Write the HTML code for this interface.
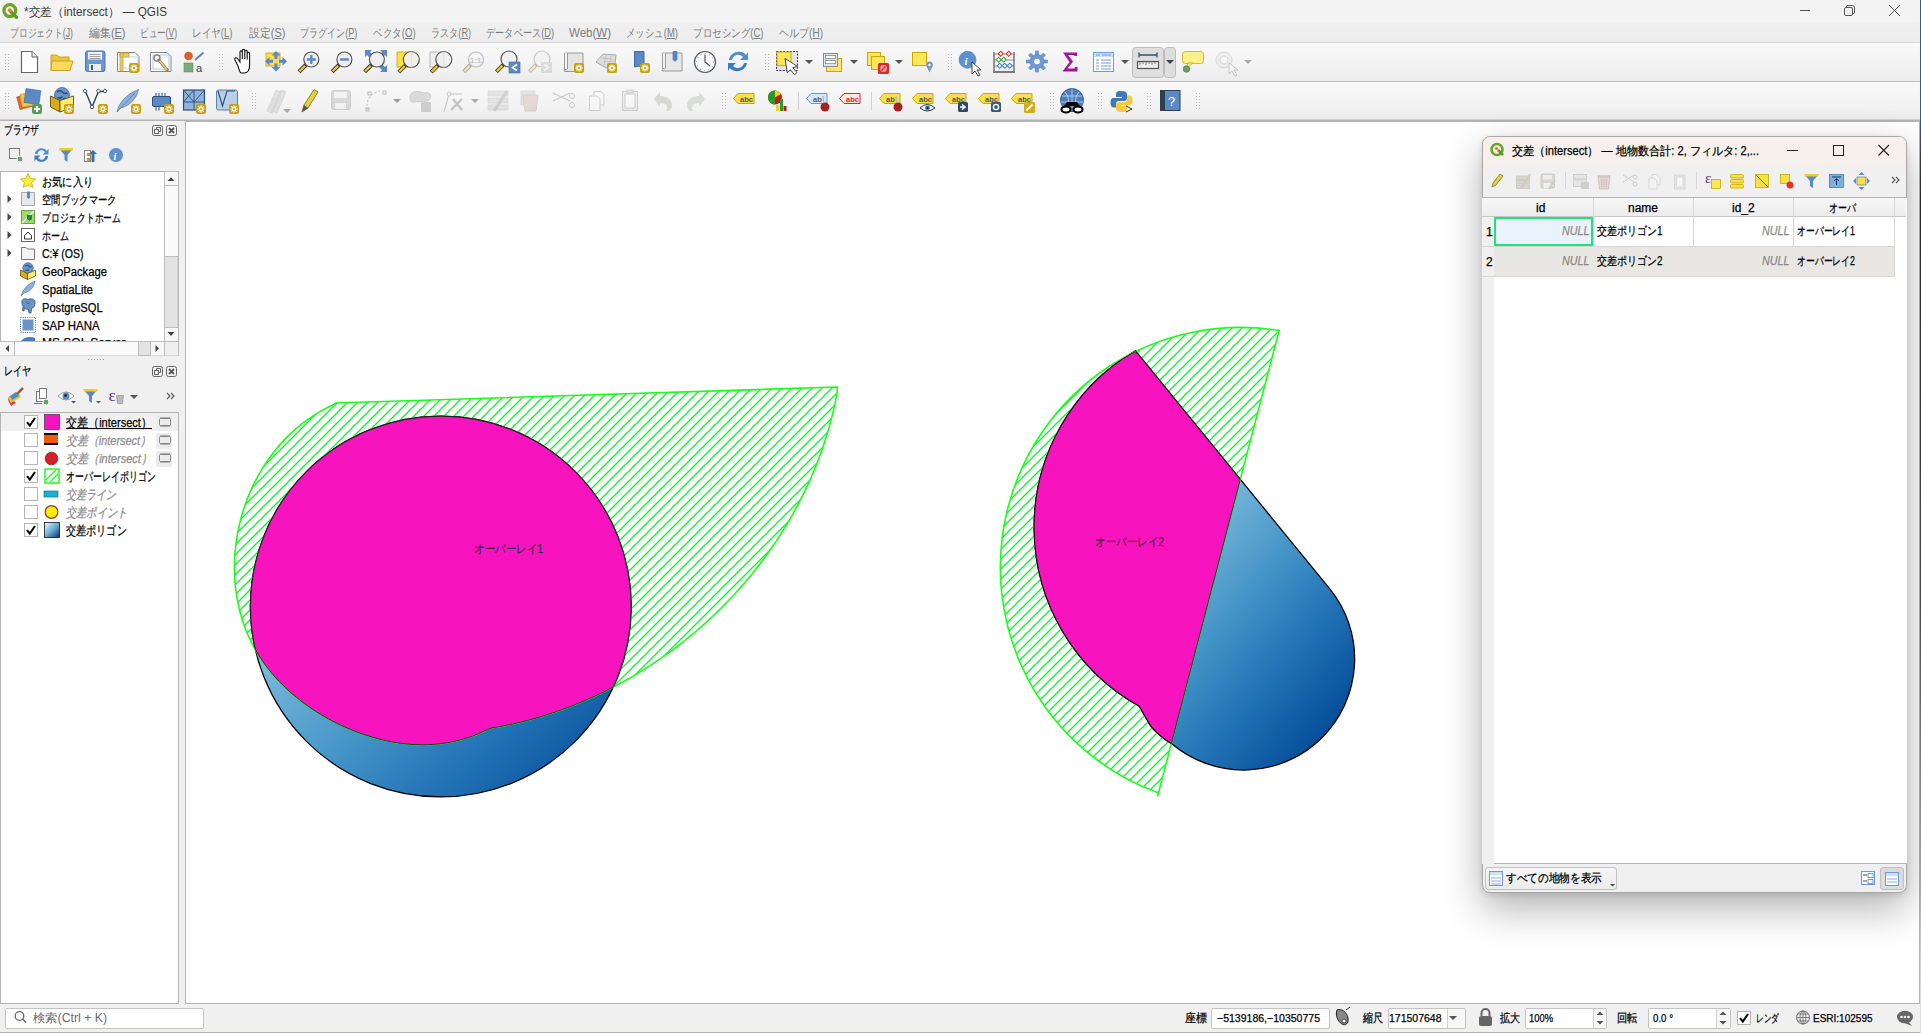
<!DOCTYPE html><html><head><meta charset="utf-8"><style>
*{margin:0;padding:0;box-sizing:border-box}
html,body{width:1921px;height:1033px;overflow:hidden;background:#f0f0f0;font-family:"Liberation Sans", sans-serif;}
.a{position:absolute}
.t{position:absolute;white-space:nowrap;line-height:16px;-webkit-text-stroke:0.25px currentColor}
svg{position:absolute;overflow:visible}
</style></head><body><div class="a" style="position:absolute;left:0px;top:0px;width:1920px;height:23px;background:#f3f3f3"></div>
<div class="t" style="left:24px;top:4px;font-size:12px;color:#3a3a3a;-webkit-text-stroke:0;transform:scaleX(0.9748);transform-origin:0 0;">*交差（intersect） — QGIS</div>
<svg style="left:0;top:0" width="24" height="23"><circle cx="9.8" cy="10.6" r="5.9" fill="none" stroke="#6aa52a" stroke-width="3.3"/><path d="M11,12 L16.5,17.3" stroke="#5e9a2a" stroke-width="3.4" stroke-linecap="round"/><circle cx="9.8" cy="10.2" r="1.9" fill="#f07a20"/></svg>
<svg style="left:1798px;top:4px" width="120" height="16"><rect x="2" y="6" width="10" height="1" fill="#555"/><rect x="46.5" y="3.5" width="8" height="8" rx="1.5" fill="none" stroke="#555"/><path d="M48.5,3.5 v-1 a1,1 0 0 1 1,-1 h5 a2,2 0 0 1 2,2 v5 a1,1 0 0 1 -1,1 h-1" fill="none" stroke="#555"/><path d="M91,1 L102,12 M102,1 L91,12" stroke="#555" stroke-width="1"/></svg>
<div class="a" style="position:absolute;left:0px;top:23px;width:1920px;height:19px;background:linear-gradient(#f0f0f0,#ededed)"></div>
<div class="a" style="position:absolute;left:0px;top:42px;width:1920px;height:1px;background:#d6d6d6"></div>
<div class="t" style="left:10px;top:25px;font-size:12px;color:#7b7b7b;-webkit-text-stroke:0;transform:scaleX(0.7326);transform-origin:0 0;">プロジェクト(<u>J</u>)</div>
<div class="t" style="left:88.5px;top:25px;font-size:12px;color:#7b7b7b;-webkit-text-stroke:0;transform:scaleX(0.9121);transform-origin:0 0;">編集(<u>E</u>)</div>
<div class="t" style="left:140px;top:25px;font-size:12px;color:#7b7b7b;-webkit-text-stroke:0;transform:scaleX(0.7113);transform-origin:0 0;">ビュー(<u>V</u>)</div>
<div class="t" style="left:192.4px;top:25px;font-size:12px;color:#7b7b7b;-webkit-text-stroke:0;transform:scaleX(0.7970);transform-origin:0 0;">レイヤ(<u>L</u>)</div>
<div class="t" style="left:249px;top:25px;font-size:12px;color:#7b7b7b;-webkit-text-stroke:0;transform:scaleX(0.9071);transform-origin:0 0;">設定(<u>S</u>)</div>
<div class="t" style="left:299.5px;top:25px;font-size:12px;color:#7b7b7b;-webkit-text-stroke:0;transform:scaleX(0.7538);transform-origin:0 0;">プラグイン(<u>P</u>)</div>
<div class="t" style="left:372.8px;top:25px;font-size:12px;color:#7b7b7b;-webkit-text-stroke:0;transform:scaleX(0.7986);transform-origin:0 0;">ベクタ(<u>O</u>)</div>
<div class="t" style="left:431px;top:25px;font-size:12px;color:#7b7b7b;-webkit-text-stroke:0;transform:scaleX(0.7594);transform-origin:0 0;">ラスタ(<u>R</u>)</div>
<div class="t" style="left:486px;top:25px;font-size:12px;color:#7b7b7b;-webkit-text-stroke:0;transform:scaleX(0.7669);transform-origin:0 0;">データベース(<u>D</u>)</div>
<div class="t" style="left:569px;top:25px;font-size:12px;color:#7b7b7b;-webkit-text-stroke:0;transform:scaleX(0.9593);transform-origin:0 0;">Web(<u>W</u>)</div>
<div class="t" style="left:626px;top:25px;font-size:12px;color:#7b7b7b;-webkit-text-stroke:0;transform:scaleX(0.7879);transform-origin:0 0;">メッシュ(<u>M</u>)</div>
<div class="t" style="left:692.5px;top:25px;font-size:12px;color:#7b7b7b;-webkit-text-stroke:0;transform:scaleX(0.7951);transform-origin:0 0;">プロセシング(<u>C</u>)</div>
<div class="t" style="left:779px;top:25px;font-size:12px;color:#7b7b7b;-webkit-text-stroke:0;transform:scaleX(0.8354);transform-origin:0 0;">ヘルプ(<u>H</u>)</div>
<div class="a" style="position:absolute;left:0px;top:43px;width:1920px;height:38px;background:linear-gradient(#f9f9f9,#f3f3f3 60%,#ebebeb)"></div>
<div class="a" style="position:absolute;left:0px;top:81px;width:1920px;height:1px;background:#bdbdbd"></div>
<div class="a" style="position:absolute;left:0px;top:82px;width:1920px;height:38px;background:linear-gradient(#f9f9f9,#f3f3f3 60%,#ebebeb)"></div>
<div class="a" style="position:absolute;left:0px;top:119px;width:1920px;height:1px;background:#d0d0d0"></div>
<div class="a" style="position:absolute;left:0px;top:120px;width:1920px;height:1px;background:#b4b4b4"></div>
<svg style="left:0;top:0" width="1921" height="121"><rect x="5" y="54" width="1" height="1" fill="#b9b9b9"/><rect x="8" y="54" width="1" height="1" fill="#b9b9b9"/><rect x="5" y="57" width="1" height="1" fill="#b9b9b9"/><rect x="8" y="57" width="1" height="1" fill="#b9b9b9"/><rect x="5" y="60" width="1" height="1" fill="#b9b9b9"/><rect x="8" y="60" width="1" height="1" fill="#b9b9b9"/><rect x="5" y="63" width="1" height="1" fill="#b9b9b9"/><rect x="8" y="63" width="1" height="1" fill="#b9b9b9"/><rect x="5" y="66" width="1" height="1" fill="#b9b9b9"/><rect x="8" y="66" width="1" height="1" fill="#b9b9b9"/><rect x="5" y="69" width="1" height="1" fill="#b9b9b9"/><rect x="8" y="69" width="1" height="1" fill="#b9b9b9"/><path d="M21.5,51.5 H32 L37.5,57 V72.5 H21.5Z" fill="#fff" stroke="#666" stroke-width="1.2"/><path d="M32,51.5 V57 H37.5" fill="#eee" stroke="#666"/><path d="M51,55 H57 L59,57 H69 V70.5 H51Z" fill="#e8c53a" stroke="#c9a227"/><path d="M52,61 H73 L70,70.5 H51Z" fill="#ffd95a" stroke="#c9a227"/><rect x="85.5" y="51" width="19.5" height="20.5" rx="2" fill="#6b99cf" stroke="#4d78ad"/><rect x="88" y="52" width="14" height="7.5" fill="#f4f4f4"/><path d="M89.5,54.5h11M89.5,56.5h11M89.5,58.5h11" stroke="#666" stroke-width="0.6"/><rect x="89" y="64" width="12" height="7" fill="#eee"/><rect x="91" y="65" width="2" height="5" fill="#3d5f8f"/><path d="M117.5,52.5 H135 L139,56.5 V71.5 H117.5Z" fill="#fff" stroke="#888"/><path d="M120,53 h3 v18 h-3z M120,53 h9 v4 h-9z" fill="#f5cf45" stroke="#c9a227" stroke-width="0.8"/><rect x="121" y="57" width="17" height="11" fill="none" stroke="#aac4ee" stroke-width="0.8"/><rect x="129" y="63" width="10" height="10" rx="2" fill="#c9a10c"/><g stroke="#fff" stroke-width="1.3"><path d="M134,64.5v7M130.5,68h7M131.5,65.5l5,5M136.5,65.5l-5,5"/></g><circle cx="134" cy="68" r="1.6" fill="#c9a10c" stroke="#fff" stroke-width="1"/><path d="M150.5,52.5 H167 L171,56.5 V71.5 H150.5Z" fill="#fff" stroke="#888"/><rect x="153" y="55" width="16" height="14" fill="none" stroke="#aac4ee"/><path d="M158,59 L168,71" stroke="#8a7a50" stroke-width="3"/><path d="M159,60 L167,70" stroke="#e8cf80" stroke-width="1.6"/><circle cx="157" cy="58" r="3" fill="none" stroke="#888" stroke-width="1.5"/><circle cx="188.5" cy="56" r="4.3" fill="#d9622b"/><path d="M195,60 L203.5,52.5" stroke="#5a86c0" stroke-width="2"/><rect x="184" y="63" width="9" height="9" fill="#7aab7a" stroke="#5d8d5d" stroke-width="0.6"/><text x="196" y="71.5" font-size="11" fill="#444" font-family="Liberation Sans">a</text><rect x="219" y="54" width="1" height="1" fill="#b9b9b9"/><rect x="222" y="54" width="1" height="1" fill="#b9b9b9"/><rect x="219" y="57" width="1" height="1" fill="#b9b9b9"/><rect x="222" y="57" width="1" height="1" fill="#b9b9b9"/><rect x="219" y="60" width="1" height="1" fill="#b9b9b9"/><rect x="222" y="60" width="1" height="1" fill="#b9b9b9"/><rect x="219" y="63" width="1" height="1" fill="#b9b9b9"/><rect x="222" y="63" width="1" height="1" fill="#b9b9b9"/><rect x="219" y="66" width="1" height="1" fill="#b9b9b9"/><rect x="222" y="66" width="1" height="1" fill="#b9b9b9"/><rect x="219" y="69" width="1" height="1" fill="#b9b9b9"/><rect x="222" y="69" width="1" height="1" fill="#b9b9b9"/><path d="M238,66 L235,60 C234,58 236,57 237.5,58.5 L240,62 V52 C240,50.5 242.3,50.5 242.3,52 V59 V50.5 C242.3,49 244.8,49 244.8,50.5 V59 V51.5 C244.8,50 247.2,50 247.2,51.5 V59.5 V53.5 C247.2,52 249.6,52 249.6,53.5 V65 C249.6,70 247.5,73 244,73 H241.5 C240,73 239,70 238,66Z" fill="#fff" stroke="#111" stroke-width="1.1"/><rect x="266" y="53" width="14" height="13" fill="#f7e04a" stroke="#c9a800" stroke-width="0.8"/><g fill="#5a89c6"><path d="M276,51 L280.5,55.5 H277.5 V59 H274.5 V55.5 H271.5Z"/><path d="M276,71.5 L280.5,67 H277.5 V63.5 H274.5 V67 H271.5Z"/><path d="M265,61.3 L269.5,56.8 V59.8 H273 V62.8 H269.5 V65.8Z"/><path d="M287,61.3 L282.5,56.8 V59.8 H279 V62.8 H282.5 V65.8Z"/></g><path d="M306.05,64.75 L299.05,71.75" stroke="#333" stroke-width="4"/><path d="M305.05,65.75 L299.55,71.25" stroke="#f0c830" stroke-width="2.2"/><circle cx="311.3" cy="59.5" r="7.5" fill="#eeeeee" stroke="#555" stroke-width="1.2"/><path d="M311.3,55v9M306.8,59.5h9" stroke="#5a89c6" stroke-width="2.4"/><path d="M339.15,64.75 L332.15,71.75" stroke="#333" stroke-width="4"/><path d="M338.15,65.75 L332.65,71.25" stroke="#f0c830" stroke-width="2.2"/><circle cx="344.4" cy="59.5" r="7.5" fill="#eeeeee" stroke="#555" stroke-width="1.2"/><path d="M339.9,59.5h9" stroke="#5a89c6" stroke-width="2.4"/><g fill="#5a89c6"><path d="M365,50h7l-2,2 3,3-3,3-3-3-2,2z"/><path d="M387,50v7l-2-2-3,3-3-3 3-3-2-2z"/><path d="M387,72h-7l2-2-3-3 3-3 3,3 2-2z"/></g><path d="M371.65,64.75 L364.65,71.75" stroke="#333" stroke-width="4"/><path d="M370.65,65.75 L365.15,71.25" stroke="#f0c830" stroke-width="2.2"/><circle cx="376.9" cy="59.5" r="7.5" fill="#eeeeee" stroke="#555" stroke-width="1.2"/><rect x="397" y="52" width="12" height="15" fill="#f7e04a" stroke="#c9a800" stroke-width="0.8"/><path d="M405.7,65.1 L398.7,72.1" stroke="#333" stroke-width="4"/><path d="M404.7,66.1 L399.2,71.6" stroke="#f0c830" stroke-width="2.2"/><circle cx="411.3" cy="59.5" r="8" fill="#f0efe8" stroke="#555" stroke-width="1.2"/><path d="M411.3,51.5 v16" stroke="#ddd"/><rect x="430" y="52" width="12" height="15" fill="#eee" stroke="#aaa" stroke-width="0.8"/><path d="M438.2,65.1 L431.2,72.1" stroke="#333" stroke-width="4"/><path d="M437.2,66.1 L431.7,71.6" stroke="#f0c830" stroke-width="2.2"/><circle cx="443.8" cy="59.5" r="8" fill="#f0f0f0" stroke="#555" stroke-width="1.2"/><path d="M443.8,51.5 v16" stroke="#ddd"/><g opacity="0.35"><path d="M470.75,64.75 L463.75,71.75" stroke="#333" stroke-width="4"/><path d="M469.75,65.75 L464.25,71.25" stroke="#f0c830" stroke-width="2.2"/><circle cx="476" cy="59.5" r="7.5" fill="#f4f4f4" stroke="#555" stroke-width="1.2"/><text x="470" y="63" font-size="8" font-weight="bold" fill="#666" font-family="Liberation Sans">1:1</text></g><path d="M503.4,64.6 L496.4,71.6" stroke="#333" stroke-width="4"/><path d="M502.4,65.6 L496.9,71.1" stroke="#f0c830" stroke-width="2.2"/><circle cx="509" cy="59" r="8" fill="#f0f0f0" stroke="#555" stroke-width="1.2"/><rect x="509" y="62" width="11" height="11" fill="#5a89c6" stroke="#3e6aa5" stroke-width="0.6"/><path d="M517,64.5 L512.5,67.5 L517,70.5" fill="none" stroke="#fff" stroke-width="1.6"/><g opacity="0.3"><path d="M536.4,64.6 L529.4,71.6" stroke="#333" stroke-width="4"/><path d="M535.4,65.6 L529.9,71.1" stroke="#f0c830" stroke-width="2.2"/><circle cx="542" cy="59" r="8" fill="#f0f0f0" stroke="#555" stroke-width="1.2"/><rect x="541" y="62" width="11" height="11" fill="#aaa"/><path d="M544,64.5 L548.5,67.5 L544,70.5" fill="none" stroke="#fff" stroke-width="1.6"/></g><path d="M564.5,53 H583 V71.5 H564.5Z" fill="#e4e4e4" stroke="#999"/><path d="M564.5,53 v16 q2,2 3,0 v-16" fill="#f4f4f4" stroke="#999"/><rect x="574" y="63" width="10" height="10" rx="2" fill="#c9a10c"/><g stroke="#fff" stroke-width="1.3"><path d="M579,64.5v7M575.5,68h7M576.5,65.5l5,5M581.5,65.5l-5,5"/></g><circle cx="579" cy="68" r="1.6" fill="#c9a10c" stroke="#fff" stroke-width="1"/><path d="M596,62 L603,54 L616,55 L615,64 L606,68Z" fill="#ddd" stroke="#aaa"/><path d="M600,58 L612,59 M603,62 L615,61 M606,55 L604,66 M611,56 L610,65" stroke="#bbb" stroke-width="0.7"/><rect x="607" y="63" width="10" height="10" rx="2" fill="#c9a10c"/><g stroke="#fff" stroke-width="1.3"><path d="M612,64.5v7M608.5,68h7M609.5,65.5l5,5M614.5,65.5l-5,5"/></g><circle cx="612" cy="68" r="1.6" fill="#c9a10c" stroke="#fff" stroke-width="1"/><path d="M634.5,51.5 H644 V70 L639,66 L634.5,67Z" fill="#5a89c6" stroke="#3e6aa5"/><rect x="640" y="63" width="10" height="10" rx="2" fill="#c9a10c"/><g stroke="#fff" stroke-width="1.3"><path d="M645,64.5v7M641.5,68h7M642.5,65.5l5,5M647.5,65.5l-5,5"/></g><circle cx="645" cy="68" r="1.6" fill="#c9a10c" stroke="#fff" stroke-width="1"/><path d="M662.5,53 H682 V71 H662.5Z" fill="#e8e8e8" stroke="#999"/><path d="M662.5,53 v15 q2,2 3,0 v-15" fill="#f4f4f4" stroke="#999"/><path d="M673,51.5 h4 v8 l-2,2 -2,-2z" fill="#5a89c6" stroke="#3e6aa5" stroke-width="0.6"/><circle cx="705" cy="62" r="10.5" fill="#fafafa" stroke="#555" stroke-width="1.2"/><circle cx="705" cy="62" r="8.5" fill="none" stroke="#5a89c6" stroke-width="1" stroke-dasharray="1 3.4"/><path d="M705,54.5 V62 L710,66" fill="none" stroke="#555" stroke-width="1.2"/><path d="M729,60 C730,52 741,49 746,55 L748,52 V60 H740 L743,57 C739,53 733,55 732,60Z" fill="#4f8fd0"/><path d="M747,63 C746,71 735,74 730,68 L728,71 V63 H736 L733,66 C737,70 743,68 744,63Z" fill="#3b7bc4"/><rect x="765" y="54" width="1" height="1" fill="#b9b9b9"/><rect x="768" y="54" width="1" height="1" fill="#b9b9b9"/><rect x="765" y="57" width="1" height="1" fill="#b9b9b9"/><rect x="768" y="57" width="1" height="1" fill="#b9b9b9"/><rect x="765" y="60" width="1" height="1" fill="#b9b9b9"/><rect x="768" y="60" width="1" height="1" fill="#b9b9b9"/><rect x="765" y="63" width="1" height="1" fill="#b9b9b9"/><rect x="768" y="63" width="1" height="1" fill="#b9b9b9"/><rect x="765" y="66" width="1" height="1" fill="#b9b9b9"/><rect x="768" y="66" width="1" height="1" fill="#b9b9b9"/><rect x="765" y="69" width="1" height="1" fill="#b9b9b9"/><rect x="768" y="69" width="1" height="1" fill="#b9b9b9"/><rect x="776.5" y="51.5" width="21" height="19" fill="#e4e4e4" stroke="#333" stroke-dasharray="2 1.3"/><rect x="777" y="52" width="14" height="13.5" fill="#fde65a" stroke="#c9a800" stroke-width="0.9"/><path d="M785,58.5 L787.3,72.8 L790.4,69.8 L794.6,74.6 L797,72.6 L792.8,67.7 L797.4,66.3Z" fill="#fff" stroke="#333" stroke-width="0.9" stroke-linejoin="round"/><path d="M805,60 h8 l-4,4z" fill="#555"/><rect x="826.5" y="58.5" width="15" height="13" fill="#fde65a" stroke="#c9a800"/><rect x="823.5" y="53.5" width="14" height="13" fill="#dfe6ee" stroke="#8a8a8a"/><rect x="825.5" y="55.5" width="10" height="3.2" fill="#fff" stroke="#777" stroke-width="0.7"/><rect x="825.5" y="60.5" width="10" height="3.2" fill="#fff" stroke="#777" stroke-width="0.7"/><path d="M850,60 h8 l-4,4z" fill="#555"/><rect x="867.5" y="52.5" width="13" height="13" fill="#fde65a" stroke="#c9a800"/><rect x="871.5" y="56.5" width="13" height="13" fill="#fde65a" stroke="#c9a800"/><rect x="878" y="63" width="11" height="11" rx="1.5" fill="#d9282f"/><circle cx="883.5" cy="68.5" r="3.4" fill="#f2a0a0"/><path d="M881.5,70.5 L885.5,66.5" stroke="#d9282f" stroke-width="1.2"/><path d="M895,60 h8 l-4,4z" fill="#555"/><rect x="912.5" y="52.5" width="14" height="13" fill="#fde65a" stroke="#c9a800"/><path d="M929.5,72.5 L926.3,66 A3.4,3.4 0 1 1 932.7,66Z" fill="#7a9ab4"/><circle cx="929.5" cy="65" r="1.2" fill="#fff"/><rect x="948" y="54" width="1" height="1" fill="#b9b9b9"/><rect x="951" y="54" width="1" height="1" fill="#b9b9b9"/><rect x="948" y="57" width="1" height="1" fill="#b9b9b9"/><rect x="951" y="57" width="1" height="1" fill="#b9b9b9"/><rect x="948" y="60" width="1" height="1" fill="#b9b9b9"/><rect x="951" y="60" width="1" height="1" fill="#b9b9b9"/><rect x="948" y="63" width="1" height="1" fill="#b9b9b9"/><rect x="951" y="63" width="1" height="1" fill="#b9b9b9"/><rect x="948" y="66" width="1" height="1" fill="#b9b9b9"/><rect x="951" y="66" width="1" height="1" fill="#b9b9b9"/><rect x="948" y="69" width="1" height="1" fill="#b9b9b9"/><rect x="951" y="69" width="1" height="1" fill="#b9b9b9"/><circle cx="967.5" cy="59.8" r="8.5" fill="#5f8fcc" stroke="#4a75b0" stroke-width="0.6"/><text x="964.5" y="64.5" font-size="11" font-style="italic" font-weight="bold" fill="#fff" font-family="Liberation Serif">i</text><path d="M972,62 L972,74 L975,71 L978,76 L980,75 L977,70 L981,70Z" fill="#fff" stroke="#333" stroke-width="0.9"/><path d="M994,52 V71 M1014,52 V71" stroke="#555" stroke-width="1.2"/><path d="M993,72 H1015" stroke="#555" stroke-width="1.5"/><path d="M994,54 H1014 M994,60 H1014 M994,66 H1014" stroke="#777" stroke-width="0.8"/><g fill="#fff" stroke-width="1.1"><rect x="999" y="52" width="3.5" height="3.5" transform="rotate(45 1000.7 53.7)" stroke="#d33"/><rect x="1007" y="52" width="3.5" height="3.5" transform="rotate(45 1008.7 53.7)" stroke="#d33"/><rect x="997" y="58" width="3.5" height="3.5" transform="rotate(45 998.7 59.7)" stroke="#4a4"/><rect x="1002" y="58" width="3.5" height="3.5" transform="rotate(45 1003.7 59.7)" stroke="#4a4"/><rect x="998" y="64" width="3.5" height="3.5" transform="rotate(45 999.7 65.7)" stroke="#48c"/><rect x="1003" y="64" width="3.5" height="3.5" transform="rotate(45 1004.7 65.7)" stroke="#48c"/><rect x="1008" y="64" width="3.5" height="3.5" transform="rotate(45 1009.7 65.7)" stroke="#48c"/></g><g fill="#6f9ad4" stroke="#5582c0" stroke-width="0.6"><rect x="1035.5" y="51" width="3" height="5" transform="rotate(0 1037 61.5)"/><rect x="1035.5" y="51" width="3" height="5" transform="rotate(45 1037 61.5)"/><rect x="1035.5" y="51" width="3" height="5" transform="rotate(90 1037 61.5)"/><rect x="1035.5" y="51" width="3" height="5" transform="rotate(135 1037 61.5)"/><rect x="1035.5" y="51" width="3" height="5" transform="rotate(180 1037 61.5)"/><rect x="1035.5" y="51" width="3" height="5" transform="rotate(225 1037 61.5)"/><rect x="1035.5" y="51" width="3" height="5" transform="rotate(270 1037 61.5)"/><rect x="1035.5" y="51" width="3" height="5" transform="rotate(315 1037 61.5)"/><circle cx="1037" cy="61.5" r="7"/></g><circle cx="1037" cy="61.5" r="2.8" fill="#fff"/><path d="M1063,52.5 H1077 V56 H1074.5 L1074,55 H1068 L1073,61.5 L1067.5,68.5 H1074.5 L1075,67 H1077.5 V71.5 H1062.5 L1069.5,62 Z" fill="#a0149e"/><rect x="1093.5" y="52.5" width="20" height="19" fill="#fff" stroke="#6f9ad4"/><rect x="1094" y="53" width="19" height="4" fill="#cfe0f5"/><path d="M1096,55h4M1102,55h9" stroke="#6f9ad4" stroke-width="1.2"/><path d="M1096,60h3M1101,60h10M1096,63h3M1101,63h10M1096,66h3M1101,66h10M1096,69h3M1101,69h10" stroke="#6f9ad4" stroke-width="1"/><path d="M1121,60 h8 l-4,4z" fill="#555"/><rect x="1132.5" y="47.5" width="31" height="30" rx="3" fill="#dedede" stroke="#bdbdbd"/><rect x="1164.5" y="47.5" width="11" height="30" rx="3" fill="#dedede" stroke="#bdbdbd"/><path d="M1139,55 H1157 M1139,52.5 V57.5 M1157,52.5 V57.5" stroke="#2e4f7a" stroke-width="1.3"/><rect x="1137.5" y="61.5" width="21" height="7" fill="#eee" stroke="#555" stroke-width="1.2"/><path d="M1140,62v3M1143,62v2M1146,62v3M1149,62v2M1152,62v3M1155,62v2" stroke="#555" stroke-width="0.8"/><path d="M1166,60 h8 l-4,4z" fill="#444"/><rect x="1182.5" y="51.5" width="21" height="12" rx="3" fill="#fdf08a" stroke="#d8b820"/><path d="M1188,63 L1187,68 L1193,63Z" fill="#fdf08a" stroke="#d8b820"/><circle cx="1186.5" cy="69" r="3.3" fill="#6aa06a" stroke="#4a7a4a" stroke-width="0.6"/><g opacity="0.3"><circle cx="1224" cy="60" r="8" fill="#ddd" stroke="#999"/><circle cx="1224" cy="60" r="4" fill="#fff" stroke="#999"/><path d="M1229,63 L1229,74 L1232,71 L1235,76 L1237,75 L1234,70 L1238,70Z" fill="#fff" stroke="#555" stroke-width="0.9"/></g><path d="M1244,60 h8 l-4,4z" fill="#aaa"/><rect x="5" y="93" width="1" height="1" fill="#b9b9b9"/><rect x="8" y="93" width="1" height="1" fill="#b9b9b9"/><rect x="5" y="96" width="1" height="1" fill="#b9b9b9"/><rect x="8" y="96" width="1" height="1" fill="#b9b9b9"/><rect x="5" y="99" width="1" height="1" fill="#b9b9b9"/><rect x="8" y="99" width="1" height="1" fill="#b9b9b9"/><rect x="5" y="102" width="1" height="1" fill="#b9b9b9"/><rect x="8" y="102" width="1" height="1" fill="#b9b9b9"/><rect x="5" y="105" width="1" height="1" fill="#b9b9b9"/><rect x="8" y="105" width="1" height="1" fill="#b9b9b9"/><rect x="5" y="108" width="1" height="1" fill="#b9b9b9"/><rect x="8" y="108" width="1" height="1" fill="#b9b9b9"/><rect x="18" y="95" width="14" height="13" transform="rotate(-15 25 101)" fill="#e2672f" stroke="#b94a1a" stroke-width="0.6"/><rect x="21" y="93" width="14" height="13" transform="rotate(-10 28 99)" fill="#f4c73d" stroke="#c9a227" stroke-width="0.6"/><rect x="25" y="89.5" width="15" height="14" transform="rotate(8 32 96)" fill="#5a89c6" stroke="#3e6aa5" stroke-width="0.6"/><rect x="32" y="104" width="10" height="10" rx="2" fill="#5b9a5b"/><path d="M37,106v6M34,109h6" stroke="#fff" stroke-width="2"/><circle cx="62" cy="95" r="7.5" fill="#6a94c8" stroke="#3e6aa5" stroke-width="0.8"/><path d="M57,92 q3,-2.5 5.5,0 q2,2.5 5,1 M57.5,97.5 q3,1.5 5,-1 M63,99 q2,-1 4,0" stroke="#2e4f7a" stroke-width="1.5" fill="none"/><path d="M50.5,96 L60,100.5 V112 L50.5,107Z" fill="#d9ae14" stroke="#4a3f10" stroke-width="0.8"/><path d="M60,100.5 L73.5,96 V107 L60,112Z" fill="#f7ea70" stroke="#4a3f10" stroke-width="0.8"/><rect x="64" y="104" width="10" height="10" rx="2" fill="#c9a10c"/><g stroke="#fff" stroke-width="1.2" stroke-linecap="round"><path d="M69,105.8v6.4M65.8,109h6.4M66.7,106.7l4.6,4.6M71.3,106.7l-4.6,4.6"/></g><circle cx="69" cy="109" r="1.1" fill="#c9a10c"/><path d="M85.5,91.5 L92,107 L98.5,91.5 L105,91.5" fill="none" stroke="#2e4050" stroke-width="1.4"/><g fill="#fff" stroke="#2e4050" stroke-width="0.9"><rect x="83.5" y="89.5" width="3" height="3" transform="rotate(45 85 91)"/><rect x="97" y="89.5" width="3" height="3" transform="rotate(45 98.5 91)"/><rect x="103.5" y="89.5" width="3" height="3" transform="rotate(45 105 91)"/><circle cx="92" cy="107" r="1.7"/></g><rect x="98" y="104" width="10" height="10" rx="2" fill="#c9a10c"/><g stroke="#fff" stroke-width="1.2" stroke-linecap="round"><path d="M103,105.8v6.4M99.8,109h6.4M100.7,106.7l4.6,4.6M105.3,106.7l-4.6,4.6"/></g><circle cx="103" cy="109" r="1.1" fill="#c9a10c"/><path d="M117,112 C119,103 125,95 138.5,89.5 C137,97 131,106 120,108Z" fill="#8fb0d8" stroke="#5d80b0" stroke-width="0.8"/><path d="M117,112 L135,93" stroke="#5d80b0" stroke-width="0.8"/><rect x="131" y="104" width="10" height="10" rx="2" fill="#c9a10c"/><g stroke="#fff" stroke-width="1.2" stroke-linecap="round"><path d="M136,105.8v6.4M132.8,109h6.4M133.7,106.7l4.6,4.6M138.3,106.7l-4.6,4.6"/></g><circle cx="136" cy="109" r="1.1" fill="#c9a10c"/><rect x="152.5" y="96.5" width="18" height="10" rx="1.5" fill="#5a89c6" stroke="#2e4f7a"/><path d="M156,93v3.5M159,93v3.5M162,93v3.5M165,93v3.5M156,107v3.5M159,107v3.5" stroke="#2e4f7a" stroke-width="1"/><rect x="164" y="104" width="10" height="10" rx="2" fill="#c9a10c"/><g stroke="#fff" stroke-width="1.2" stroke-linecap="round"><path d="M169,105.8v6.4M165.8,109h6.4M166.7,106.7l4.6,4.6M171.3,106.7l-4.6,4.6"/></g><circle cx="169" cy="109" r="1.1" fill="#c9a10c"/><rect x="183.5" y="90" width="21" height="20" fill="#8fb3dc" stroke="#2e4f7a" stroke-width="1.2"/><path d="M183.5,102 H204.5 M194,90 V110 M183.5,90 L194,102 M194,90 L183.5,102 M204.5,90 L194,102" stroke="#2e4f7a" stroke-width="0.9"/><rect x="196" y="104" width="10" height="10" rx="2" fill="#c9a10c"/><g stroke="#fff" stroke-width="1.2" stroke-linecap="round"><path d="M201,105.8v6.4M197.8,109h6.4M198.7,106.7l4.6,4.6M203.3,106.7l-4.6,4.6"/></g><circle cx="201" cy="109" r="1.1" fill="#c9a10c"/><rect x="216.5" y="90" width="21" height="20" rx="2" fill="#b9cfe8" stroke="#5d80b0"/><path d="M218,91 L222.5,106 L227,91 H235" fill="none" stroke="#2e4f7a" stroke-width="1.2"/><rect x="229" y="104" width="10" height="10" rx="2" fill="#c9a10c"/><g stroke="#fff" stroke-width="1.2" stroke-linecap="round"><path d="M234,105.8v6.4M230.8,109h6.4M231.7,106.7l4.6,4.6M236.3,106.7l-4.6,4.6"/></g><circle cx="234" cy="109" r="1.1" fill="#c9a10c"/><rect x="252" y="93" width="1" height="1" fill="#b9b9b9"/><rect x="255" y="93" width="1" height="1" fill="#b9b9b9"/><rect x="252" y="96" width="1" height="1" fill="#b9b9b9"/><rect x="255" y="96" width="1" height="1" fill="#b9b9b9"/><rect x="252" y="99" width="1" height="1" fill="#b9b9b9"/><rect x="255" y="99" width="1" height="1" fill="#b9b9b9"/><rect x="252" y="102" width="1" height="1" fill="#b9b9b9"/><rect x="255" y="102" width="1" height="1" fill="#b9b9b9"/><rect x="252" y="105" width="1" height="1" fill="#b9b9b9"/><rect x="255" y="105" width="1" height="1" fill="#b9b9b9"/><rect x="252" y="108" width="1" height="1" fill="#b9b9b9"/><rect x="255" y="108" width="1" height="1" fill="#b9b9b9"/><g opacity="0.35"><path d="M267,111 L276,90 L281,92 L272,113Z M272,111 L281,90 L286,92 L277,113Z" fill="#bbb" stroke="#888" stroke-width="0.6"/></g><path d="M283,109 h8 l-4,4z" fill="#aaa"/><path d="M302,112 L304,105 L314,89.5 L318,92 L308,108Z" fill="#e6cf3a" stroke="#7a6a1a" stroke-width="0.8"/><path d="M302,112 L304,105 L308,108Z" fill="#555"/><g opacity="0.3"><rect x="331.5" y="90.5" width="19" height="19" rx="2" fill="#999" stroke="#777"/><rect x="334" y="92" width="13" height="6" fill="#eee"/><rect x="335" y="103" width="11" height="6" fill="#eee"/></g><g opacity="0.35" fill="none" stroke="#555"><path d="M367,110 C366,100 370,93 380,91" stroke-dasharray="2 2"/><rect x="366" y="108" width="3" height="3"/><rect x="368" y="92" width="3" height="3"/><rect x="383" y="91" width="3" height="3"/></g><path d="M393,99 h8 l-4,4z" fill="#999"/><g opacity="0.35"><path d="M410,97 C410,90 420,91 424,93 C430,91 432,96 430,99 C428,103 420,101 413,102 C410,102 410,100 410,97Z" fill="#aaa" stroke="#777" stroke-width="0.8"/><rect x="421" y="102" width="10" height="10" rx="1.5" fill="#888"/></g><g opacity="0.35" stroke="#666"><path d="M444,112 L449,94 M449,94 H462" fill="none"/><circle cx="449" cy="94" r="2" fill="#fff"/><path d="M451,110 L462,99 M453,99 L462,110" stroke-width="2.2"/></g><path d="M471,99 h8 l-4,4z" fill="#aaa"/><g opacity="0.3"><rect x="488" y="91" width="20" height="5" fill="#bbb" stroke="#888" stroke-width="0.6"/><rect x="488" y="98" width="20" height="5" fill="#bbb" stroke="#888" stroke-width="0.6"/><rect x="488" y="105" width="20" height="5" fill="#bbb" stroke="#888" stroke-width="0.6"/><path d="M494,111 L507,91" stroke="#777" stroke-width="3"/></g><g opacity="0.3"><rect x="521" y="91" width="14" height="14" fill="#bbb" stroke="#888" stroke-width="0.6"/><path d="M523,95 H538 L536,111 H525Z" fill="#c99" stroke="#866" stroke-width="0.8"/></g><g opacity="0.35" stroke="#777" fill="none"><path d="M553,93 L570,101 M553,101 L570,93" stroke-width="1.2"/><circle cx="572" cy="96" r="2.5"/><circle cx="572" cy="105" r="2.5"/></g><g opacity="0.3" fill="#fff" stroke="#777"><path d="M594,91.5 H601 L604,94.5 V105 H594Z"/><path d="M589.5,96 H597 L600,99 V110.5 H589.5Z"/></g><g opacity="0.3" stroke="#777"><rect x="622.5" y="91.5" width="15" height="19" fill="#ddd"/><rect x="625" y="94" width="10" height="14" fill="#fff"/><rect x="627" y="90" width="6" height="3" fill="#bbb"/></g><g opacity="0.3"><path d="M654,99 L660,92 V96 C668,96 672,100 672,105 C672,109 669,111 666,111 C668,108 668,103 660,103 V107Z" fill="#998"/></g><g opacity="0.3"><path d="M705,99 L699,92 V96 C691,96 687,100 687,105 C687,109 690,111 693,111 C691,108 691,103 699,103 V107Z" fill="#9a9"/></g><rect x="722" y="93" width="1" height="1" fill="#b9b9b9"/><rect x="725" y="93" width="1" height="1" fill="#b9b9b9"/><rect x="722" y="96" width="1" height="1" fill="#b9b9b9"/><rect x="725" y="96" width="1" height="1" fill="#b9b9b9"/><rect x="722" y="99" width="1" height="1" fill="#b9b9b9"/><rect x="725" y="99" width="1" height="1" fill="#b9b9b9"/><rect x="722" y="102" width="1" height="1" fill="#b9b9b9"/><rect x="725" y="102" width="1" height="1" fill="#b9b9b9"/><rect x="722" y="105" width="1" height="1" fill="#b9b9b9"/><rect x="725" y="105" width="1" height="1" fill="#b9b9b9"/><rect x="722" y="108" width="1" height="1" fill="#b9b9b9"/><rect x="725" y="108" width="1" height="1" fill="#b9b9b9"/><path d="M733.5,98.5 L738,93.5 H754 V103.5 H738 Z" fill="#f7e04a" stroke="#c9a800"/><text x="740" y="101.5" font-size="7.5" font-weight="bold" fill="#555" font-family="Liberation Sans">abc</text><circle cx="775" cy="97.5" r="7" fill="#c81818"/><path d="M775,97.5 L768,97.5 A7,7 0 0 1 775,90.5Z" fill="#2a9a2a"/><path d="M775,97.5 L775,90.5 A7,7 0 0 1 781,94Z" fill="#f0d020"/><path d="M775,97.5 L768,97.5 A7,7 0 0 0 775,104.5Z" fill="#2a9a2a"/><rect x="776" y="105" width="3.5" height="6" fill="#f0d020"/><rect x="780" y="99" width="3" height="12" fill="#2a9a2a"/><rect x="783.5" y="106" width="3" height="5" fill="#c81818"/><rect x="798" y="92" width="1" height="18" fill="#d0d0d0"/><path d="M806.5,98.5 L811,93.5 H827 V103.5 H811 Z" fill="#d8e8fb" stroke="#5a9ae8"/><text x="813" y="101.5" font-size="7.5" font-weight="bold" fill="#555" font-family="Liberation Sans">ab</text><circle cx="825" cy="107" r="4.5" fill="#a82020"/><path d="M823.5,102 L823,96" stroke="#bbb" stroke-width="1.5"/><path d="M839.5,98.5 L844,93.5 H860 V103.5 H844 Z" fill="#fde8ea" stroke="#e82020"/><text x="846" y="101.5" font-size="7.5" font-weight="bold" fill="#e82020" font-family="Liberation Sans">abc</text><rect x="871" y="92" width="1" height="18" fill="#d0d0d0"/><path d="M879.5,98.5 L884,93.5 H900 V103.5 H884 Z" fill="#f7e04a" stroke="#c9a800"/><text x="886" y="101.5" font-size="7.5" font-weight="bold" fill="#555" font-family="Liberation Sans">ab</text><circle cx="898" cy="107" r="4.5" fill="#a82020"/><path d="M896.5,102 L896,96" stroke="#bbb" stroke-width="1.5"/><path d="M912.5,98.5 L917,93.5 H933 V103.5 H917 Z" fill="#f7e04a" stroke="#c9a800"/><text x="919" y="101.5" font-size="7.5" font-weight="bold" fill="#555" font-family="Liberation Sans">abc</text><path d="M920,108 Q927,101 935,108 Q927,114 920,108Z" fill="#fff" stroke="#333"/><circle cx="927.5" cy="108" r="2.4" fill="#3a7ad0"/><circle cx="927.5" cy="108" r="1" fill="#000"/><path d="M945.5,98.5 L950,93.5 H966 V103.5 H950 Z" fill="#f7e04a" stroke="#c9a800"/><text x="952" y="101.5" font-size="7.5" font-weight="bold" fill="#555" font-family="Liberation Sans">abc</text><rect x="958" y="102" width="10" height="10" rx="1.5" fill="#2e4a66"/><path d="M960,107 h4 M962,104.5 L965,107 L962,109.5" stroke="#fff" stroke-width="1.6" fill="none"/><path d="M978.5,98.5 L983,93.5 H999 V103.5 H983 Z" fill="#f7e04a" stroke="#c9a800"/><text x="985" y="101.5" font-size="7.5" font-weight="bold" fill="#555" font-family="Liberation Sans">abc</text><rect x="991" y="102" width="10" height="10" rx="1.5" fill="#3a5a78"/><circle cx="996" cy="107" r="2.6" fill="none" stroke="#fff" stroke-width="1.4"/><path d="M1011.5,98.5 L1016,93.5 H1032 V103.5 H1016 Z" fill="#f7e04a" stroke="#c9a800"/><text x="1018" y="101.5" font-size="7.5" font-weight="bold" fill="#555" font-family="Liberation Sans">abc</text><rect x="1024" y="102" width="11" height="11" rx="1.5" fill="#d4ac1a"/><path d="M1026.5,110.5 L1032.5,104.5" stroke="#fff" stroke-width="1.8"/><rect x="1050" y="93" width="1" height="1" fill="#b9b9b9"/><rect x="1053" y="93" width="1" height="1" fill="#b9b9b9"/><rect x="1050" y="96" width="1" height="1" fill="#b9b9b9"/><rect x="1053" y="96" width="1" height="1" fill="#b9b9b9"/><rect x="1050" y="99" width="1" height="1" fill="#b9b9b9"/><rect x="1053" y="99" width="1" height="1" fill="#b9b9b9"/><rect x="1050" y="102" width="1" height="1" fill="#b9b9b9"/><rect x="1053" y="102" width="1" height="1" fill="#b9b9b9"/><rect x="1050" y="105" width="1" height="1" fill="#b9b9b9"/><rect x="1053" y="105" width="1" height="1" fill="#b9b9b9"/><rect x="1050" y="108" width="1" height="1" fill="#b9b9b9"/><rect x="1053" y="108" width="1" height="1" fill="#b9b9b9"/><circle cx="1072" cy="100" r="11.5" fill="#4d7fbd" stroke="#2e4f7a" stroke-width="0.8"/><path d="M1062,96 H1082 M1061,102 H1083 M1072,89 V111 M1065,92 Q1072,100 1065,108 M1079,92 Q1072,100 1079,108" stroke="#c8dcf2" stroke-width="0.8" fill="none"/><ellipse cx="1066" cy="109.5" rx="4.5" ry="3" fill="#fff" stroke="#000" stroke-width="2.2"/><ellipse cx="1078" cy="109.5" rx="4.5" ry="3" fill="#fff" stroke="#000" stroke-width="2.2"/><path d="M1064,106 L1067,102 H1077 L1080,106Z" fill="#000"/><rect x="1098" y="93" width="1" height="1" fill="#b9b9b9"/><rect x="1101" y="93" width="1" height="1" fill="#b9b9b9"/><rect x="1098" y="96" width="1" height="1" fill="#b9b9b9"/><rect x="1101" y="96" width="1" height="1" fill="#b9b9b9"/><rect x="1098" y="99" width="1" height="1" fill="#b9b9b9"/><rect x="1101" y="99" width="1" height="1" fill="#b9b9b9"/><rect x="1098" y="102" width="1" height="1" fill="#b9b9b9"/><rect x="1101" y="102" width="1" height="1" fill="#b9b9b9"/><rect x="1098" y="105" width="1" height="1" fill="#b9b9b9"/><rect x="1101" y="105" width="1" height="1" fill="#b9b9b9"/><rect x="1098" y="108" width="1" height="1" fill="#b9b9b9"/><rect x="1101" y="108" width="1" height="1" fill="#b9b9b9"/><path d="M1121,91 C1116,91 1116,93 1116,95 V97 H1122 V98 H1113 C1111,98 1110.5,101 1110.5,103 C1110.5,106 1112,107.5 1114,107.5 H1116 V104 C1116,102 1117,101 1119,101 H1124 C1126,101 1127,100 1127,98 V94 C1127,92 1125,91 1121,91Z" fill="#3d7ab5"/><path d="M1122,112 C1127,112 1127,110 1127,108 V106 H1121 V105 H1130 C1132,105 1132.5,102 1132.5,100 C1132.5,97 1131,95.5 1129,95.5 H1127 V99 C1127,101 1126,102 1124,102 H1119 C1117,102 1116,103 1116,105 V109 C1116,111 1118,112 1122,112Z" fill="#f7c93e"/><path d="M1126,106 L1132,109 L1126,112" stroke="#333" stroke-width="1" fill="none"/><rect x="1147" y="93" width="1" height="1" fill="#b9b9b9"/><rect x="1150" y="93" width="1" height="1" fill="#b9b9b9"/><rect x="1147" y="96" width="1" height="1" fill="#b9b9b9"/><rect x="1150" y="96" width="1" height="1" fill="#b9b9b9"/><rect x="1147" y="99" width="1" height="1" fill="#b9b9b9"/><rect x="1150" y="99" width="1" height="1" fill="#b9b9b9"/><rect x="1147" y="102" width="1" height="1" fill="#b9b9b9"/><rect x="1150" y="102" width="1" height="1" fill="#b9b9b9"/><rect x="1147" y="105" width="1" height="1" fill="#b9b9b9"/><rect x="1150" y="105" width="1" height="1" fill="#b9b9b9"/><rect x="1147" y="108" width="1" height="1" fill="#b9b9b9"/><rect x="1150" y="108" width="1" height="1" fill="#b9b9b9"/><rect x="1160.5" y="90.5" width="19.5" height="20" fill="#5a89c6" stroke="#2e3f50"/><rect x="1160.5" y="90.5" width="4.5" height="20" fill="#2e3f50"/><text x="1168" y="105.5" font-size="13" fill="#fff" font-family="Liberation Sans">?</text><rect x="1196" y="93" width="1" height="1" fill="#b9b9b9"/><rect x="1199" y="93" width="1" height="1" fill="#b9b9b9"/><rect x="1196" y="96" width="1" height="1" fill="#b9b9b9"/><rect x="1199" y="96" width="1" height="1" fill="#b9b9b9"/><rect x="1196" y="99" width="1" height="1" fill="#b9b9b9"/><rect x="1199" y="99" width="1" height="1" fill="#b9b9b9"/><rect x="1196" y="102" width="1" height="1" fill="#b9b9b9"/><rect x="1199" y="102" width="1" height="1" fill="#b9b9b9"/><rect x="1196" y="105" width="1" height="1" fill="#b9b9b9"/><rect x="1199" y="105" width="1" height="1" fill="#b9b9b9"/><rect x="1196" y="108" width="1" height="1" fill="#b9b9b9"/><rect x="1199" y="108" width="1" height="1" fill="#b9b9b9"/></svg>
<div class="a" style="position:absolute;left:0px;top:121px;width:185px;height:882px;background:#f0f0f0"></div>
<div class="t" style="left:4px;top:122px;font-size:12px;color:#000;;transform:scaleX(0.7292);transform-origin:0 0;">ブラウザ</div>
<div class="t" style="left:4px;top:363px;font-size:12px;color:#000;;transform:scaleX(0.7500);transform-origin:0 0;">レイヤ</div>
<div class="a" style="position:absolute;left:0px;top:171px;width:179px;height:185px;background:#fff;border:1px solid #b4b4b4"></div>
<svg style="left:0;top:171px" width="180" height="186">
<rect x="164.5" y="0.5" width="13.5" height="170.5" fill="#e3e3e3" stroke="#bdbdbd"/>
<rect x="165" y="1" width="13" height="13.5" fill="#f7f7f7"/><path d="M164.5,14.5 H178" stroke="#bdbdbd"/>
<rect x="165" y="15" width="13" height="70" fill="#fafafa"/><path d="M164.5,85.5 H178" stroke="#bdbdbd"/>
<rect x="165" y="157" width="13" height="13.5" fill="#f7f7f7"/><path d="M164.5,156.5 H178" stroke="#bdbdbd"/>
<path d="M167.5,10 L171,6.3 L174.5,10Z" fill="#444"/><path d="M167.5,161 L171,165 L174.5,161Z" fill="#444"/>
<rect x="0" y="170.5" width="178" height="14" fill="#e3e3e3" stroke="#bdbdbd"/>
<rect x="0" y="171" width="14" height="13.5" fill="#f7f7f7"/><path d="M14.5,170.5 V184.5" stroke="#bdbdbd"/>
<rect x="15" y="171" width="123" height="13.5" fill="#fafafa"/><path d="M138.5,170.5 V184.5" stroke="#bdbdbd"/>
<rect x="150.5" y="171" width="13.5" height="13.5" fill="#f7f7f7"/><path d="M150.5,170.5 V184.5 M164.5,170.5 V184.5" stroke="#bdbdbd"/>
<rect x="165" y="171" width="13" height="13.5" fill="#efefef"/>
<path d="M9,174 L5.5,177.5 L9,181Z" fill="#444"/><path d="M155.5,174 L159,177.5 L155.5,181Z" fill="#444"/>
</svg>
<div class="a" style="left:1px;top:172px;width:163px;height:169px;overflow:hidden">
<div class="t" style="left:41px;top:1.5px;font-size:12px;color:#000;;transform:scaleX(0.8500);transform-origin:0 0;">お気に入り</div>
<div class="t" style="left:41px;top:19.5px;font-size:12px;color:#000;;transform:scaleX(0.7771);transform-origin:0 0;">空間ブックマーク</div>
<svg style="left:6px;top:22px" width="6" height="10"><path d="M0.5,1 L4.5,5 L0.5,9Z" fill="#444"/></svg>
<div class="t" style="left:41px;top:37.5px;font-size:12px;color:#000;;transform:scaleX(0.7315);transform-origin:0 0;">プロジェクトホーム</div>
<svg style="left:6px;top:40px" width="6" height="10"><path d="M0.5,1 L4.5,5 L0.5,9Z" fill="#444"/></svg>
<div class="t" style="left:41px;top:55.5px;font-size:12px;color:#000;;transform:scaleX(0.7500);transform-origin:0 0;">ホーム</div>
<svg style="left:6px;top:58px" width="6" height="10"><path d="M0.5,1 L4.5,5 L0.5,9Z" fill="#444"/></svg>
<div class="t" style="left:41px;top:73.5px;font-size:12px;color:#000;;transform:scaleX(0.8766);transform-origin:0 0;">C:¥ (OS)</div>
<svg style="left:6px;top:76px" width="6" height="10"><path d="M0.5,1 L4.5,5 L0.5,9Z" fill="#444"/></svg>
<div class="t" style="left:41px;top:91.5px;font-size:12px;color:#000;;transform:scaleX(0.9367);transform-origin:0 0;">GeoPackage</div>
<div class="t" style="left:41px;top:109.5px;font-size:12px;color:#000;;transform:scaleX(0.9555);transform-origin:0 0;">SpatiaLite</div>
<div class="t" style="left:41px;top:127.5px;font-size:12px;color:#000;;transform:scaleX(0.9270);transform-origin:0 0;">PostgreSQL</div>
<div class="t" style="left:41px;top:145.5px;font-size:12px;color:#000;;transform:scaleX(0.9526);transform-origin:0 0;">SAP HANA</div>
<div class="t" style="left:41px;top:163px;font-size:12px;color:#000;;">MS SQL Server</div>
</div>
<svg style="left:88px;top:359px" width="20" height="3"><g fill="#a0a0a0"><rect x="0" y="0" width="1" height="1"/><rect x="3" y="0" width="1" height="1"/><rect x="6" y="0" width="1" height="1"/><rect x="9" y="0" width="1" height="1"/><rect x="12" y="0" width="1" height="1"/><rect x="15" y="0" width="1" height="1"/></g></svg>
<div class="a" style="position:absolute;left:0px;top:412px;width:179px;height:592px;background:#fff;border:1px solid #b4b4b4"></div>
<div class="a" style="position:absolute;left:1px;top:413px;width:177px;height:18px;background:#f0f0f0"></div>
<div class="a" style="position:absolute;left:24px;top:415px;width:14px;height:14px;background:#fff;border:1px solid #b5b5b5"></div>
<svg style="left:24px;top:415px" width="14" height="14"><path d="M3,7.2 L5.8,10.5 L11,3" fill="none" stroke="#000" stroke-width="2"/></svg>
<div class="t" style="left:66px;top:414.5px;font-size:13px;color:#000;text-decoration:underline;;transform:scaleX(0.8503);transform-origin:0 0;">交差（intersect）</div>
<div class="a" style="position:absolute;left:156px;top:415px;width:16px;height:16px;background:#ececec;border-radius:2px"></div>
<div class="a" style="position:absolute;left:24px;top:433px;width:14px;height:14px;background:#fff;border:1px solid #b5b5b5"></div>
<div class="t" style="left:66px;top:432.5px;font-size:13px;color:#8a8a8a;font-style:italic;;transform:scaleX(0.8404);transform-origin:0 0;">交差（intersect）</div>
<div class="a" style="position:absolute;left:156px;top:433px;width:16px;height:16px;background:#ececec;border-radius:2px"></div>
<div class="a" style="position:absolute;left:24px;top:451px;width:14px;height:14px;background:#fff;border:1px solid #b5b5b5"></div>
<div class="t" style="left:66px;top:450.5px;font-size:13px;color:#8a8a8a;font-style:italic;;transform:scaleX(0.8503);transform-origin:0 0;">交差（intersect）</div>
<div class="a" style="position:absolute;left:156px;top:451px;width:16px;height:16px;background:#ececec;border-radius:2px"></div>
<div class="a" style="position:absolute;left:24px;top:469px;width:14px;height:14px;background:#fff;border:1px solid #b5b5b5"></div>
<svg style="left:24px;top:469px" width="14" height="14"><path d="M3,7.2 L5.8,10.5 L11,3" fill="none" stroke="#000" stroke-width="2"/></svg>
<div class="t" style="left:66px;top:468.5px;font-size:13px;color:#000;;transform:scaleX(0.6900);transform-origin:0 0;">オーバーレイポリゴン</div>
<div class="a" style="position:absolute;left:24px;top:487px;width:14px;height:14px;background:#fff;border:1px solid #b5b5b5"></div>
<div class="t" style="left:66px;top:486.5px;font-size:13px;color:#8a8a8a;font-style:italic;;transform:scaleX(0.7738);transform-origin:0 0;">交差ライン</div>
<div class="a" style="position:absolute;left:24px;top:505px;width:14px;height:14px;background:#fff;border:1px solid #b5b5b5"></div>
<div class="t" style="left:66px;top:504.5px;font-size:13px;color:#8a8a8a;font-style:italic;;transform:scaleX(0.7872);transform-origin:0 0;">交差ポイント</div>
<div class="a" style="position:absolute;left:24px;top:523px;width:14px;height:14px;background:#fff;border:1px solid #b5b5b5"></div>
<svg style="left:24px;top:523px" width="14" height="14"><path d="M3,7.2 L5.8,10.5 L11,3" fill="none" stroke="#000" stroke-width="2"/></svg>
<div class="t" style="left:66px;top:522.5px;font-size:13px;color:#000;;transform:scaleX(0.7782);transform-origin:0 0;">交差ポリゴン</div>
<div class="a" style="position:absolute;left:185px;top:121px;width:1735px;height:883px;background:#fff;border:1px solid #b4b4b4"></div>
<svg style="left:0;top:0" width="1921" height="1033">
<defs>
<linearGradient id="bg1" gradientUnits="userSpaceOnUse" x1="154.6" y1="303.9" x2="660.2" y2="838.5"><stop offset="0.0" stop-color="#f7fbff"/><stop offset="0.125" stop-color="#deebf7"/><stop offset="0.25" stop-color="#c6dbef"/><stop offset="0.375" stop-color="#9ecae1"/><stop offset="0.5" stop-color="#6baed6"/><stop offset="0.625" stop-color="#4292c6"/><stop offset="0.75" stop-color="#2171b5"/><stop offset="0.875" stop-color="#08519c"/><stop offset="1.0" stop-color="#08306b"/></linearGradient>
<linearGradient id="bg2" gradientUnits="userSpaceOnUse" x1="981.8" y1="376.7" x2="1402.9" y2="741.6"><stop offset="0.0" stop-color="#f7fbff"/><stop offset="0.125" stop-color="#deebf7"/><stop offset="0.25" stop-color="#c6dbef"/><stop offset="0.375" stop-color="#9ecae1"/><stop offset="0.5" stop-color="#6baed6"/><stop offset="0.625" stop-color="#4292c6"/><stop offset="0.75" stop-color="#2171b5"/><stop offset="0.875" stop-color="#08519c"/><stop offset="1.0" stop-color="#08306b"/></linearGradient>
<pattern id="hatch" patternUnits="userSpaceOnUse" width="10" height="10"><path d="M-1,11 L11,-1 M-6,6 L6,-6 M4,16 L16,4" stroke="#11ee33" stroke-width="1.3"/></pattern>
<clipPath id="cp1"><circle cx="440.8" cy="606.5" r="190.4"/></clipPath>
<clipPath id="cpg1"><path d="M336.2,403 L837.1,387 L837.1,387.0 L837.2,392.3 L836.2,397.4 L835.2,402.6 L834.1,407.7 L832.9,412.8 L831.6,417.9 L830.3,422.9 L828.9,428.0 L827.4,433.0 L825.9,438.0 L824.3,442.9 L822.6,447.9 L820.9,452.8 L819.1,457.7 L817.3,462.6 L815.3,467.4 L813.3,472.2 L811.3,477.0 L809.2,481.8 L807.0,486.5 L804.8,491.2 L802.5,495.9 L800.1,500.5 L797.7,505.1 L795.2,509.7 L792.7,514.3 L790.1,518.8 L787.5,523.3 L784.8,527.7 L782.0,532.2 L779.2,536.6 L776.4,540.9 L773.4,545.2 L770.5,549.5 L767.4,553.8 L764.4,558.0 L761.2,562.2 L758.1,566.3 L754.8,570.4 L751.6,574.5 L748.2,578.5 L744.9,582.5 L741.4,586.4 L738.0,590.3 L734.5,594.2 L730.9,598.0 L727.3,601.8 L723.6,605.6 L719.9,609.3 L716.2,612.9 L712.4,616.5 L708.6,620.1 L704.7,623.6 L700.8,627.1 L696.9,630.5 L692.9,633.9 L688.9,637.2 L684.8,640.5 L680.7,643.8 L676.6,647.0 L672.4,650.1 L668.2,653.2 L663.9,656.2 L659.6,659.2 L655.3,662.2 L651.0,665.1 L646.6,667.9 L642.1,670.7 L637.7,673.4 L633.2,676.1 L628.7,678.7 L624.1,681.3 L619.6,683.8 L615.0,686.2 L610.3,688.6 L605.7,691.0 L601.0,693.3 L596.3,695.5 L591.5,697.7 L586.8,699.8 L582.0,701.8 L577.1,703.8 L572.3,705.8 L567.4,707.6 L562.5,709.4 L557.6,711.2 L552.7,712.9 L547.8,714.5 L542.8,716.1 L537.8,717.6 L532.8,719.0 L527.7,720.3 L522.7,721.6 L517.6,722.9 L512.6,724.0 L507.5,725.1 L502.3,726.2 L497.2,727.1 L491.9,727.8 L491.9,727.8 L487.5,729.6 L483.0,731.7 L478.5,733.7 L474.0,735.5 L469.5,737.1 L465.0,738.6 L460.4,739.9 L455.9,741.0 L451.3,742.0 L446.7,742.8 L442.2,743.5 L437.6,744.1 L433.0,744.4 L428.4,744.7 L423.8,744.8 L419.1,744.7 L414.5,744.6 L409.9,744.3 L405.3,743.8 L400.7,743.3 L396.1,742.6 L391.5,741.8 L386.9,740.9 L382.3,739.8 L377.8,738.7 L373.2,737.4 L368.6,736.0 L364.1,734.6 L359.6,733.0 L355.1,731.3 L350.6,729.5 L346.2,727.6 L341.8,725.7 L337.4,723.6 L333.1,721.4 L328.8,719.1 L324.6,716.7 L320.4,714.3 L316.3,711.7 L312.2,709.1 L308.3,706.3 L304.3,703.5 L300.5,700.6 L296.7,697.6 L293.0,694.5 L289.4,691.4 L285.9,688.1 L282.5,684.8 L279.2,681.4 L275.9,677.9 L272.8,674.4 L269.8,670.7 L266.9,667.0 L264.1,663.3 L261.4,659.4 L258.9,655.5 L256.4,651.5 L254.1,647.5 L251.9,643.4 L249.9,639.2 L248.0,635.0 L246.2,630.7 L244.6,626.4 L243.0,622.0 L241.6,617.6 L240.4,613.2 L239.2,608.7 L238.2,604.1 L237.3,599.6 L236.5,595.0 L235.9,590.4 L235.3,585.7 L234.9,581.1 L234.7,576.4 L234.5,571.7 L234.5,567.0 L234.5,562.3 L234.7,557.6 L235.0,553.0 L235.5,548.3 L236.0,543.6 L236.7,538.9 L237.4,534.2 L238.3,529.6 L239.3,525.0 L240.5,520.4 L241.7,515.8 L243.0,511.3 L244.5,506.8 L246.1,502.3 L247.7,497.9 L249.5,493.5 L251.4,489.1 L253.4,484.8 L255.5,480.6 L257.8,476.4 L260.1,472.3 L262.5,468.2 L265.1,464.3 L267.7,460.3 L270.5,456.5 L273.3,452.7 L276.3,449.0 L279.3,445.4 L282.5,441.9 L285.7,438.4 L289.1,435.1 L292.5,431.8 L296.1,428.6 L299.7,425.6 L303.5,422.6 L307.3,419.8 L311.3,417.1 L315.3,414.4 L319.5,411.9 L323.7,409.5 L328.0,407.3 L332.4,405.2 L336.2,403.0 Z"/></clipPath>
<clipPath id="cp2"><path d="M1135.3,350.7 L1329.6,588.7 A111.1,111.1 0 0 1 1172.4,744.3 C1165,740 1152,730 1147.8,721.1 L1139.3,706.2 A204.7,204.7 0 0 1 1135.3,350.7 Z"/></clipPath>
<clipPath id="cpg2"><path d="M1279.1,330.6 A240.0,240.0 0 0 0 1158.6,793.1 L1157.5,796.5 Z"/></clipPath>
</defs>
<circle cx="440.8" cy="606.5" r="190.4" fill="url(#bg1)" stroke="#000" stroke-width="1.3"/>
<path d="M336.2,403 L837.1,387 L837.1,387.0 L837.2,392.3 L836.2,397.4 L835.2,402.6 L834.1,407.7 L832.9,412.8 L831.6,417.9 L830.3,422.9 L828.9,428.0 L827.4,433.0 L825.9,438.0 L824.3,442.9 L822.6,447.9 L820.9,452.8 L819.1,457.7 L817.3,462.6 L815.3,467.4 L813.3,472.2 L811.3,477.0 L809.2,481.8 L807.0,486.5 L804.8,491.2 L802.5,495.9 L800.1,500.5 L797.7,505.1 L795.2,509.7 L792.7,514.3 L790.1,518.8 L787.5,523.3 L784.8,527.7 L782.0,532.2 L779.2,536.6 L776.4,540.9 L773.4,545.2 L770.5,549.5 L767.4,553.8 L764.4,558.0 L761.2,562.2 L758.1,566.3 L754.8,570.4 L751.6,574.5 L748.2,578.5 L744.9,582.5 L741.4,586.4 L738.0,590.3 L734.5,594.2 L730.9,598.0 L727.3,601.8 L723.6,605.6 L719.9,609.3 L716.2,612.9 L712.4,616.5 L708.6,620.1 L704.7,623.6 L700.8,627.1 L696.9,630.5 L692.9,633.9 L688.9,637.2 L684.8,640.5 L680.7,643.8 L676.6,647.0 L672.4,650.1 L668.2,653.2 L663.9,656.2 L659.6,659.2 L655.3,662.2 L651.0,665.1 L646.6,667.9 L642.1,670.7 L637.7,673.4 L633.2,676.1 L628.7,678.7 L624.1,681.3 L619.6,683.8 L615.0,686.2 L610.3,688.6 L605.7,691.0 L601.0,693.3 L596.3,695.5 L591.5,697.7 L586.8,699.8 L582.0,701.8 L577.1,703.8 L572.3,705.8 L567.4,707.6 L562.5,709.4 L557.6,711.2 L552.7,712.9 L547.8,714.5 L542.8,716.1 L537.8,717.6 L532.8,719.0 L527.7,720.3 L522.7,721.6 L517.6,722.9 L512.6,724.0 L507.5,725.1 L502.3,726.2 L497.2,727.1 L491.9,727.8 L491.9,727.8 L487.5,729.6 L483.0,731.7 L478.5,733.7 L474.0,735.5 L469.5,737.1 L465.0,738.6 L460.4,739.9 L455.9,741.0 L451.3,742.0 L446.7,742.8 L442.2,743.5 L437.6,744.1 L433.0,744.4 L428.4,744.7 L423.8,744.8 L419.1,744.7 L414.5,744.6 L409.9,744.3 L405.3,743.8 L400.7,743.3 L396.1,742.6 L391.5,741.8 L386.9,740.9 L382.3,739.8 L377.8,738.7 L373.2,737.4 L368.6,736.0 L364.1,734.6 L359.6,733.0 L355.1,731.3 L350.6,729.5 L346.2,727.6 L341.8,725.7 L337.4,723.6 L333.1,721.4 L328.8,719.1 L324.6,716.7 L320.4,714.3 L316.3,711.7 L312.2,709.1 L308.3,706.3 L304.3,703.5 L300.5,700.6 L296.7,697.6 L293.0,694.5 L289.4,691.4 L285.9,688.1 L282.5,684.8 L279.2,681.4 L275.9,677.9 L272.8,674.4 L269.8,670.7 L266.9,667.0 L264.1,663.3 L261.4,659.4 L258.9,655.5 L256.4,651.5 L254.1,647.5 L251.9,643.4 L249.9,639.2 L248.0,635.0 L246.2,630.7 L244.6,626.4 L243.0,622.0 L241.6,617.6 L240.4,613.2 L239.2,608.7 L238.2,604.1 L237.3,599.6 L236.5,595.0 L235.9,590.4 L235.3,585.7 L234.9,581.1 L234.7,576.4 L234.5,571.7 L234.5,567.0 L234.5,562.3 L234.7,557.6 L235.0,553.0 L235.5,548.3 L236.0,543.6 L236.7,538.9 L237.4,534.2 L238.3,529.6 L239.3,525.0 L240.5,520.4 L241.7,515.8 L243.0,511.3 L244.5,506.8 L246.1,502.3 L247.7,497.9 L249.5,493.5 L251.4,489.1 L253.4,484.8 L255.5,480.6 L257.8,476.4 L260.1,472.3 L262.5,468.2 L265.1,464.3 L267.7,460.3 L270.5,456.5 L273.3,452.7 L276.3,449.0 L279.3,445.4 L282.5,441.9 L285.7,438.4 L289.1,435.1 L292.5,431.8 L296.1,428.6 L299.7,425.6 L303.5,422.6 L307.3,419.8 L311.3,417.1 L315.3,414.4 L319.5,411.9 L323.7,409.5 L328.0,407.3 L332.4,405.2 L336.2,403.0 Z" fill="url(#hatch)" stroke="#1aff1a" stroke-width="1.6"/>
<path d="M336.2,403 L837.1,387 L837.1,387.0 L837.2,392.3 L836.2,397.4 L835.2,402.6 L834.1,407.7 L832.9,412.8 L831.6,417.9 L830.3,422.9 L828.9,428.0 L827.4,433.0 L825.9,438.0 L824.3,442.9 L822.6,447.9 L820.9,452.8 L819.1,457.7 L817.3,462.6 L815.3,467.4 L813.3,472.2 L811.3,477.0 L809.2,481.8 L807.0,486.5 L804.8,491.2 L802.5,495.9 L800.1,500.5 L797.7,505.1 L795.2,509.7 L792.7,514.3 L790.1,518.8 L787.5,523.3 L784.8,527.7 L782.0,532.2 L779.2,536.6 L776.4,540.9 L773.4,545.2 L770.5,549.5 L767.4,553.8 L764.4,558.0 L761.2,562.2 L758.1,566.3 L754.8,570.4 L751.6,574.5 L748.2,578.5 L744.9,582.5 L741.4,586.4 L738.0,590.3 L734.5,594.2 L730.9,598.0 L727.3,601.8 L723.6,605.6 L719.9,609.3 L716.2,612.9 L712.4,616.5 L708.6,620.1 L704.7,623.6 L700.8,627.1 L696.9,630.5 L692.9,633.9 L688.9,637.2 L684.8,640.5 L680.7,643.8 L676.6,647.0 L672.4,650.1 L668.2,653.2 L663.9,656.2 L659.6,659.2 L655.3,662.2 L651.0,665.1 L646.6,667.9 L642.1,670.7 L637.7,673.4 L633.2,676.1 L628.7,678.7 L624.1,681.3 L619.6,683.8 L615.0,686.2 L610.3,688.6 L605.7,691.0 L601.0,693.3 L596.3,695.5 L591.5,697.7 L586.8,699.8 L582.0,701.8 L577.1,703.8 L572.3,705.8 L567.4,707.6 L562.5,709.4 L557.6,711.2 L552.7,712.9 L547.8,714.5 L542.8,716.1 L537.8,717.6 L532.8,719.0 L527.7,720.3 L522.7,721.6 L517.6,722.9 L512.6,724.0 L507.5,725.1 L502.3,726.2 L497.2,727.1 L491.9,727.8 L491.9,727.8 L487.5,729.6 L483.0,731.7 L478.5,733.7 L474.0,735.5 L469.5,737.1 L465.0,738.6 L460.4,739.9 L455.9,741.0 L451.3,742.0 L446.7,742.8 L442.2,743.5 L437.6,744.1 L433.0,744.4 L428.4,744.7 L423.8,744.8 L419.1,744.7 L414.5,744.6 L409.9,744.3 L405.3,743.8 L400.7,743.3 L396.1,742.6 L391.5,741.8 L386.9,740.9 L382.3,739.8 L377.8,738.7 L373.2,737.4 L368.6,736.0 L364.1,734.6 L359.6,733.0 L355.1,731.3 L350.6,729.5 L346.2,727.6 L341.8,725.7 L337.4,723.6 L333.1,721.4 L328.8,719.1 L324.6,716.7 L320.4,714.3 L316.3,711.7 L312.2,709.1 L308.3,706.3 L304.3,703.5 L300.5,700.6 L296.7,697.6 L293.0,694.5 L289.4,691.4 L285.9,688.1 L282.5,684.8 L279.2,681.4 L275.9,677.9 L272.8,674.4 L269.8,670.7 L266.9,667.0 L264.1,663.3 L261.4,659.4 L258.9,655.5 L256.4,651.5 L254.1,647.5 L251.9,643.4 L249.9,639.2 L248.0,635.0 L246.2,630.7 L244.6,626.4 L243.0,622.0 L241.6,617.6 L240.4,613.2 L239.2,608.7 L238.2,604.1 L237.3,599.6 L236.5,595.0 L235.9,590.4 L235.3,585.7 L234.9,581.1 L234.7,576.4 L234.5,571.7 L234.5,567.0 L234.5,562.3 L234.7,557.6 L235.0,553.0 L235.5,548.3 L236.0,543.6 L236.7,538.9 L237.4,534.2 L238.3,529.6 L239.3,525.0 L240.5,520.4 L241.7,515.8 L243.0,511.3 L244.5,506.8 L246.1,502.3 L247.7,497.9 L249.5,493.5 L251.4,489.1 L253.4,484.8 L255.5,480.6 L257.8,476.4 L260.1,472.3 L262.5,468.2 L265.1,464.3 L267.7,460.3 L270.5,456.5 L273.3,452.7 L276.3,449.0 L279.3,445.4 L282.5,441.9 L285.7,438.4 L289.1,435.1 L292.5,431.8 L296.1,428.6 L299.7,425.6 L303.5,422.6 L307.3,419.8 L311.3,417.1 L315.3,414.4 L319.5,411.9 L323.7,409.5 L328.0,407.3 L332.4,405.2 L336.2,403.0 Z" clip-path="url(#cp1)" fill="#f714bf" stroke="#114411" stroke-width="1"/>
<circle cx="440.8" cy="606.5" r="190.4" clip-path="url(#cpg1)" fill="none" stroke="#222" stroke-width="1.2"/>
<path d="M1135.3,350.7 L1329.6,588.7 A111.1,111.1 0 0 1 1172.4,744.3 C1165,740 1152,730 1147.8,721.1 L1139.3,706.2 A204.7,204.7 0 0 1 1135.3,350.7 Z" fill="url(#bg2)" stroke="#000" stroke-width="1.3"/>
<path d="M1279.1,330.6 A240.0,240.0 0 0 0 1158.6,793.1 L1157.5,796.5 Z" fill="url(#hatch)" stroke="#1aff1a" stroke-width="1.6"/>
<path d="M1279.1,330.6 A240.0,240.0 0 0 0 1158.6,793.1 L1157.5,796.5 Z" clip-path="url(#cp2)" fill="#f714bf" stroke="#114411" stroke-width="1"/>
<path d="M1135.3,350.7 L1329.6,588.7 A111.1,111.1 0 0 1 1172.4,744.3 C1165,740 1152,730 1147.8,721.1 L1139.3,706.2 A204.7,204.7 0 0 1 1135.3,350.7 Z" clip-path="url(#cpg2)" fill="none" stroke="#111" stroke-width="1.1"/>
</svg>
<div class="t" style="left:474px;top:541px;font-size:12px;color:#2e2a2e;-webkit-text-stroke:0.1px currentColor;transform:scaleX(0.8769);transform-origin:0 0;">オーバーレイ1</div>
<div class="t" style="left:1095px;top:534px;font-size:12px;color:#2e2a2e;-webkit-text-stroke:0.1px currentColor;transform:scaleX(0.8769);transform-origin:0 0;">オーバーレイ2</div>
<div class="a" style="position:absolute;left:1920px;top:0px;width:1px;height:1033px;background:linear-gradient(#1d5fa8 0,#1d5fa8 120px,#3a2a1a 200px,#6b4a22 600px,#e9dcc0 1000px)"></div>
<div class="a" style="position:absolute;left:0px;top:1004px;width:1920px;height:28px;background:#f0f0f0"></div>
<div class="a" style="position:absolute;left:0px;top:1032px;width:1920px;height:1px;background:#a9b9aa"></div>
<div class="a" style="position:absolute;left:5px;top:1008px;width:199px;height:21px;background:#fff;border:1px solid #c4c4c4;border-radius:2px"></div>
<div class="t" style="left:33px;top:1010px;font-size:12px;color:#6a6a6a;-webkit-text-stroke:0;transform:scaleX(1.0229);transform-origin:0 0;">検索(Ctrl + K)</div>
<div class="t" style="left:1185px;top:1010px;font-size:12px;color:#000;;transform:scaleX(0.9167);transform-origin:0 0;">座標</div>
<div class="a" style="position:absolute;left:1211px;top:1008px;width:119px;height:21px;background:#fff;border:1px solid #c4c4c4;border-radius:2px"></div>
<div class="t" style="left:1217px;top:1010px;font-size:11px;color:#000;;transform:scaleX(0.9566);transform-origin:0 0;">−5139186,−10350775</div>
<div class="t" style="left:1363px;top:1010px;font-size:12px;color:#000;;transform:scaleX(0.8333);transform-origin:0 0;">縮尺</div>
<div class="a" style="position:absolute;left:1388px;top:1008px;width:78px;height:21px;background:#fff;border:1px solid #c4c4c4;border-radius:2px"></div>
<div class="a" style="position:absolute;left:1447px;top:1009px;width:18px;height:19px;background:#f6f6f6;border-left:1px solid #d0d0d0"></div>
<div class="t" style="left:1389px;top:1010px;font-size:11px;color:#000;;transform:scaleX(0.9535);transform-origin:0 0;">171507648</div>
<div class="t" style="left:1500px;top:1010px;font-size:12px;color:#000;;transform:scaleX(0.8333);transform-origin:0 0;">拡大</div>
<div class="a" style="position:absolute;left:1525px;top:1008px;width:82px;height:21px;background:#fff;border:1px solid #c4c4c4;border-radius:2px"></div>
<div class="a" style="position:absolute;left:1593px;top:1009px;width:13px;height:19px;background:#f6f6f6;border-left:1px solid #d0d0d0"></div>
<div class="t" style="left:1529px;top:1010px;font-size:11px;color:#000;;transform:scaleX(0.8529);transform-origin:0 0;">100%</div>
<div class="t" style="left:1617px;top:1010px;font-size:12px;color:#000;;transform:scaleX(0.8542);transform-origin:0 0;">回転</div>
<div class="a" style="position:absolute;left:1648px;top:1008px;width:83px;height:21px;background:#fff;border:1px solid #c4c4c4;border-radius:2px"></div>
<div class="a" style="position:absolute;left:1716px;top:1009px;width:14px;height:19px;background:#f6f6f6;border-left:1px solid #d0d0d0"></div>
<div class="t" style="left:1653px;top:1010px;font-size:11px;color:#000;;transform:scaleX(0.8791);transform-origin:0 0;">0.0 °</div>
<div class="a" style="position:absolute;left:1737px;top:1011px;width:14px;height:14px;background:#fff;border:1px solid #b5b5b5"></div>
<svg style="left:1737px;top:1011px" width="14" height="14"><path d="M3,7.2 L5.8,10.5 L11,3" fill="none" stroke="#000" stroke-width="2"/></svg>
<div class="t" style="left:1756px;top:1010px;font-size:11px;color:#000;;transform:scaleX(0.6970);transform-origin:0 0;">レンダ</div>
<div class="t" style="left:1813px;top:1010px;font-size:11px;color:#000;;transform:scaleX(0.9093);transform-origin:0 0;">ESRI:102595</div>
<svg style="left:0;top:0" width="1921" height="1033"><circle cx="19.5" cy="1016" r="4.3" fill="none" stroke="#666" stroke-width="1.3"/><path d="M22.5,1019 L26,1022.5" stroke="#666" stroke-width="1.6"/><path d="M1337,1010 C1341,1008 1347,1012 1348,1018 C1349,1024 1345,1026 1342,1024 C1338,1022 1335,1015 1337,1010Z" fill="#888" stroke="#222"/><circle cx="1344" cy="1021" r="2" fill="#fff" stroke="#222" stroke-width="0.8"/><path d="M1346,1010 L1350,1007" stroke="#222"/><path d="M1449,1016 h8 l-4,4z" fill="#555"/><rect x="1479" y="1016" width="13" height="10" rx="2" fill="#666"/><path d="M1481.5,1016 v-3 a4,4 0 0 1 8,0 v3" fill="none" stroke="#666" stroke-width="2"/><path d="M1596.5,1015 l3.5,-3.5 3.5,3.5z M1596.5,1021 l3.5,3.5 3.5,-3.5z" fill="#555"/><path d="M1719.5,1015 l3.5,-3.5 3.5,3.5z M1719.5,1021 l3.5,3.5 3.5,-3.5z" fill="#555"/><circle cx="1803" cy="1017.5" r="6.5" fill="none" stroke="#666"/><path d="M1796.5,1017.5 h13 M1803,1011 v13 M1798,1014 h10 M1798,1021 h10" stroke="#666" stroke-width="0.8"/><ellipse cx="1803" cy="1017.5" rx="3" ry="6.5" fill="none" stroke="#666" stroke-width="0.8"/><ellipse cx="1905" cy="1017" rx="8" ry="6.3" fill="#666"/><path d="M1902,1022 L1912,1026 L1907,1020Z" fill="#666"/><circle cx="1901.5" cy="1017" r="1.3" fill="#fff"/><circle cx="1905" cy="1017" r="1.3" fill="#fff"/><circle cx="1908.5" cy="1017" r="1.3" fill="#fff"/></svg>
<svg style="left:0;top:0" width="186" height="560"><rect x="152.5" y="125.5" width="10" height="10" rx="2" fill="none" stroke="#666"/><rect x="154.5" y="129.5" width="4" height="4" fill="none" stroke="#666"/><path d="M156.5,129.5 v-2 h4 v4 h-2" fill="none" stroke="#666"/><rect x="166.5" y="125.5" width="10" height="10" rx="2" fill="none" stroke="#666"/><path d="M169,128 l5,5 M174,128 l-5,5" stroke="#555" stroke-width="1.8"/><rect x="152.5" y="366.5" width="10" height="10" rx="2" fill="none" stroke="#666"/><rect x="154.5" y="370.5" width="4" height="4" fill="none" stroke="#666"/><path d="M156.5,370.5 v-2 h4 v4 h-2" fill="none" stroke="#666"/><rect x="166.5" y="366.5" width="10" height="10" rx="2" fill="none" stroke="#666"/><path d="M169,369 l5,5 M174,369 l-5,5" stroke="#555" stroke-width="1.8"/><rect x="9.5" y="148.5" width="10" height="10" fill="none" stroke="#777"/><circle cx="20" cy="159" r="3" fill="#6aa06a" stroke="#fff"/><path d="M35,154 C35,148 44,146 47,151 L48.5,148.5 V154.5 H42.5 L45,152 C42,149 38,150 37.5,154Z" fill="#4f8fd0"/><path d="M48,156 C48,162 39,164 36,159 L34.5,161.5 V155.5 H40.5 L38,158 C41,161 45,160 45.5,156Z" fill="#3b7bc4"/><path d="M59,148.5 H73 L67.5,155 V162 L64.5,160 V155Z" fill="#5a89c6"/><rect x="59" y="148" width="14" height="2.5" fill="#f0d020"/><rect x="84.5" y="150.5" width="6" height="11" fill="#fff" stroke="#888"/><path d="M93,150 L89,154 H91.5 V162 H94.5 V154 H97Z" fill="#3d6fb0"/><rect x="87" y="153" width="3" height="3" fill="#f08020"/><rect x="87" y="158" width="3" height="3" fill="#f08020"/><circle cx="116" cy="155" r="7" fill="#5f8fcc"/><text x="113.5" y="159.5" font-size="10" font-style="italic" font-weight="bold" fill="#fff" font-family="Liberation Serif">i</text><path d="M28,173.5 L30.3,178.5 L35.5,179 L31.5,182.5 L32.8,187.5 L28,185 L23.2,187.5 L24.5,182.5 L20.5,179 L25.7,178.5Z" fill="#ffee40" stroke="#c9a800" stroke-width="0.8"/><path d="M21.5,192.5 H34.5 V205.5 H21.5Z" fill="#e8e8e8" stroke="#aaa"/><path d="M27,191.5 h3 v6 l-1.5,1.5 -1.5,-1.5z" fill="#5a89c6"/><rect x="21.5" y="210.5" width="13" height="13" fill="#9fd86b" stroke="#6aa04a"/><path d="M22,223 L34,211" stroke="#fff" stroke-width="1.2"/><path d="M27,215 h5 v4 l-2.5,2 -2.5,-2z" fill="#208a40"/><rect x="21.5" y="228.5" width="13" height="13" fill="#fff" stroke="#666"/><path d="M24.5,235.5 L28,232 L31.5,235.5 V239 H24.5Z" fill="none" stroke="#333"/><path d="M21.5,247.5 H26 L27.5,249 H34.5 V259.5 H21.5Z" fill="#f4f4f4" stroke="#777"/><circle cx="28" cy="268" r="5.3" fill="#6a94c8" stroke="#3e6aa5" stroke-width="0.7"/><path d="M25,266 q2,-1.5 3.5,0 q1.5,1.5 3,0.5 M25.5,270 q2,1 3.5,-0.5" stroke="#2e4f7a" stroke-width="1.1" fill="none"/><path d="M20.5,270 L27.5,273.5 V279.5 L20.5,276Z" fill="#d9ae14" stroke="#4a3f10" stroke-width="0.7"/><path d="M27.5,273.5 L35.5,270 V276 L27.5,279.5Z" fill="#f7ea70" stroke="#4a3f10" stroke-width="0.7"/><path d="M21,296 C23,289 28,284 35,281 C34,287 30,292 24,293Z" fill="#8fb0d8" stroke="#5d80b0" stroke-width="0.8"/><path d="M22,303 C21,299 25,298 28,299.5 C31,298 35,299 35,302.5 C35,306 33.5,308 31.5,308.5 L31,313 H29 L28.3,309 C27,309.5 25.5,309 24.5,308 L24,311 L22.5,310.5 L23,306 C22.3,305.3 22,304.2 22,303Z" fill="#6a94c8" stroke="#2e4f7a" stroke-width="0.8"/><path d="M26,302 C27,304 29,304 30,302.5" stroke="#2e4f7a" stroke-width="0.7" fill="none"/><rect x="22.5" y="319.5" width="11" height="11" fill="#6a94c8"/><rect x="20.5" y="317.5" width="15" height="15" fill="none" stroke="#3e6aa5" stroke-dasharray="1 1.2"/><path d="M21,341 C24,337 30,336 35,338 L35,341Z" fill="#4a78b8"/><path d="M9,396 L16,403 L11,406 L8,400Z" fill="#e04040"/><path d="M8,398 L18,392 L21,397 L11,403Z" fill="#f0c030"/><path d="M10,396 L16,392 L19,396 L12,400Z" fill="#4a8ad0"/><path d="M17,394 L23,388" stroke="#8a6a3a" stroke-width="2.5"/><rect x="36.5" y="391.5" width="9" height="10" fill="#fff" stroke="#777"/><rect x="39.5" y="388.5" width="7" height="10" fill="#fff" stroke="#777"/><path d="M34,403.5 h8" stroke="#777"/><circle cx="46" cy="402" r="3" fill="#6aa06a" stroke="#fff"/><path d="M58,396 Q66,388 74,396 Q66,404 58,396Z" fill="#fff" stroke="#999"/><circle cx="66" cy="396" r="3.5" fill="#5a89c6"/><circle cx="65.5" cy="395.5" r="1.3" fill="#111"/><path d="M71,401 h5 l-2.5,2.5z" fill="#555"/><path d="M83.5,389.5 H97.5 L92,396 V403 L89,401 V396Z" fill="#5a89c6"/><rect x="83.5" y="389" width="14" height="2.5" fill="#f0d020"/><path d="M96,401 h5 l-2.5,2.5z" fill="#555"/><text x="108.5" y="400.5" font-size="17" fill="#5b2d86" font-family="Liberation Serif">ε</text><path d="M116.5,395.5 h7 l-1,8 h-5z" fill="#bbb" stroke="#888" stroke-width="0.6"/><path d="M130,395 h8 l-4,4z" fill="#555"/><path d="M167,393 l3,3 -3,3 M171,393 l3,3 -3,3" fill="none" stroke="#555" stroke-width="1.1"/><rect x="44.5" y="414.5" width="15" height="15" fill="#f714bf" stroke="#222" stroke-width="0.6"/><rect x="44" y="434" width="14" height="10" fill="#f25a0f"/><rect x="44" y="433" width="14" height="2" fill="#111"/><rect x="44" y="443" width="14" height="2" fill="#111"/><circle cx="51.5" cy="458.5" r="6.3" fill="#d91f26" stroke="#8a1a1a" stroke-width="0.8"/><rect x="45" y="469" width="14" height="14" fill="#fff" stroke="#1aff1a" stroke-width="1.5"/><path d="M46,480 L56,470 M50,482 L58,474" stroke="#1aff1a" stroke-width="1.2"/><rect x="44" y="491" width="14" height="6" fill="#1bb0d8" stroke="#0a6a80" stroke-width="0.6"/><circle cx="51.5" cy="512" r="6.3" fill="#ffee00" stroke="#8a3a2a" stroke-width="1.2"/><defs><linearGradient id="lg" x1="0" y1="0" x2="1" y2="1"><stop offset="0" stop-color="#f7fbff"/><stop offset="0.5" stop-color="#6baed6"/><stop offset="1" stop-color="#08306b"/></linearGradient></defs><rect x="44.5" y="522.5" width="15" height="15" fill="url(#lg)" stroke="#111" stroke-width="0.8"/><rect x="159.5" y="418.5" width="11" height="7" rx="1" fill="none" stroke="#888"/><path d="M161,417v1.5M163,417v1.5M165,417v1.5M167,417v1.5M169,417v1.5M161,425.5v1.5M163,425.5v1.5M165,425.5v1.5M167,425.5v1.5M169,425.5v1.5" stroke="#777" stroke-width="1"/><rect x="159.5" y="436.5" width="11" height="7" rx="1" fill="none" stroke="#888"/><path d="M161,435v1.5M163,435v1.5M165,435v1.5M167,435v1.5M169,435v1.5M161,443.5v1.5M163,443.5v1.5M165,443.5v1.5M167,443.5v1.5M169,443.5v1.5" stroke="#777" stroke-width="1"/><rect x="159.5" y="454.5" width="11" height="7" rx="1" fill="none" stroke="#888"/><path d="M161,453v1.5M163,453v1.5M165,453v1.5M167,453v1.5M169,453v1.5M161,461.5v1.5M163,461.5v1.5M165,461.5v1.5M167,461.5v1.5M169,461.5v1.5" stroke="#777" stroke-width="1"/></svg>

<div class="a" style="position:absolute;left:1482px;top:136px;width:425px;height:757px;border-radius:8px;box-shadow:0 16px 40px rgba(0,0,0,0.30),0 2px 6px rgba(0,0,0,0.12);background:#f0f0f0;border:1px solid #a9a9a9;overflow:hidden">
<div class="a" style="position:absolute;left:0px;top:0px;width:425px;height:29px;background:#f6efec"></div>
</div>
<div class="t" style="left:1512px;top:143px;font-size:12px;color:#000;;transform:scaleX(0.9261);transform-origin:0 0;">交差（intersect） — 地物数合計: 2, フィルタ: 2,...</div>
<svg style="left:1780px;top:140px" width="120" height="20"><rect x="7" y="10" width="11" height="1" fill="#222"/><rect x="53.5" y="5.5" width="10" height="10" fill="none" stroke="#222" stroke-width="1"/><path d="M98.5,5 L109,15.5 M109,5 L98.5,15.5" stroke="#222" stroke-width="1.1"/></svg>
<div class="a" style="position:absolute;left:1482px;top:197px;width:425px;height:667px;background:#fff;border-top:1px solid #b4b4b4;border-bottom:1px solid #b4b4b4"></div>
<div class="a" style="position:absolute;left:1482px;top:198px;width:12px;height:666px;background:#f0f0f0"></div>
<div class="a" style="position:absolute;left:1482px;top:198px;width:424px;height:19px;background:linear-gradient(#f7f7f7,#ededed);border-bottom:1px solid #c8c8c8"></div>
<div class="a" style="position:absolute;left:1593px;top:198px;width:1px;height:79px;background:#d6d6d6"></div>
<div class="a" style="position:absolute;left:1693px;top:198px;width:1px;height:79px;background:#d6d6d6"></div>
<div class="a" style="position:absolute;left:1793px;top:198px;width:1px;height:79px;background:#d6d6d6"></div>
<div class="a" style="position:absolute;left:1894px;top:198px;width:1px;height:79px;background:#d6d6d6"></div>
<div class="a" style="position:absolute;left:1494px;top:247px;width:400px;height:30px;background:#e9e7e4"></div>
<div class="a" style="position:absolute;left:1482px;top:246px;width:412px;height:1px;background:#d6d6d6"></div>
<div class="a" style="position:absolute;left:1482px;top:276px;width:412px;height:1px;background:#d6d6d6"></div>
<div class="a" style="position:absolute;left:1494px;top:217px;width:99px;height:29px;background:#eaf3fb;border:2px solid #1ee37a"></div>
<div class="t" style="left:1536px;top:200px;font-size:12px;color:#000;;">id</div>
<div class="t" style="left:1628px;top:200px;font-size:12px;color:#000;;">name</div>
<div class="t" style="left:1732px;top:200px;font-size:12px;color:#000;;">id_2</div>
<div class="t" style="left:1829px;top:200px;font-size:12px;color:#000;;transform:scaleX(0.7500);transform-origin:0 0;">オーバ</div>
<div class="t" style="left:1486px;top:224px;font-size:12px;color:#000;;">1</div>
<div class="t" style="left:1486px;top:254px;font-size:12px;color:#000;;">2</div>
<div class="t" style="left:1562px;top:223px;font-size:12px;color:#8a8a8a;font-style:italic;transform:scaleX(0.8961);transform-origin:0 0;">NULL</div>
<div class="t" style="left:1762px;top:223px;font-size:12px;color:#8a8a8a;font-style:italic;transform:scaleX(0.8961);transform-origin:0 0;">NULL</div>
<div class="t" style="left:1562px;top:253px;font-size:12px;color:#8a8a8a;font-style:italic;transform:scaleX(0.8961);transform-origin:0 0;">NULL</div>
<div class="t" style="left:1762px;top:253px;font-size:12px;color:#8a8a8a;font-style:italic;transform:scaleX(0.8961);transform-origin:0 0;">NULL</div>
<div class="t" style="left:1597px;top:223px;font-size:12px;color:#000;;transform:scaleX(0.8324);transform-origin:0 0;">交差ポリゴン1</div>
<div class="t" style="left:1597px;top:253px;font-size:12px;color:#000;;transform:scaleX(0.8324);transform-origin:0 0;">交差ポリゴン2</div>
<div class="t" style="left:1797px;top:223px;font-size:12px;color:#000;;transform:scaleX(0.7371);transform-origin:0 0;">オーバーレイ1</div>
<div class="t" style="left:1797px;top:253px;font-size:12px;color:#000;;transform:scaleX(0.7371);transform-origin:0 0;">オーバーレイ2</div>
<div class="a" style="position:absolute;left:1485px;top:867px;width:132px;height:23px;background:linear-gradient(#f6f6f6,#ececec);border:1px solid #c2c2c2;border-radius:3px"></div>
<div class="t" style="left:1506px;top:870px;font-size:12px;color:#000;;transform:scaleX(0.8870);transform-origin:0 0;">すべての地物を表示</div>
<div class="a" style="position:absolute;left:1880px;top:867px;width:24px;height:23px;background:#dcdcdc;border:1px solid #c0c0c0;border-radius:3px"></div>
<svg style="left:0;top:0" width="1921" height="1033"><circle cx="1497" cy="149.5" r="5.5" fill="none" stroke="#6aa52a" stroke-width="2.6"/><path d="M1498,150 L1503,155" stroke="#5a9a2a" stroke-width="2.6"/><circle cx="1496.5" cy="148.5" r="1.6" fill="#f07020"/><path d="M1492,187 L1493,183 L1500,174 L1503,176 L1496,185Z" fill="#e6cf3a" stroke="#7a6a1a" stroke-width="0.7"/><g fill="#d9d7d2" stroke="#c4c1bb" stroke-width="0.7"><rect x="1516.5" y="176" width="13" height="3.5"/><rect x="1516.5" y="180.5" width="13" height="3.5"/><rect x="1516.5" y="185" width="13" height="3.5"/></g><path d="M1521,189 L1530,174" stroke="#cfccc6" stroke-width="2.2"/><rect x="1541" y="174" width="13.5" height="14" rx="1.5" fill="#d9d7d2" stroke="#c4c1bb" stroke-width="0.7"/><rect x="1543" y="175" width="9" height="4.5" fill="#eeeeee"/><rect x="1543.5" y="183" width="7" height="5" fill="#eeeeee"/><path d="M1549,189 L1555,180" stroke="#cfccc6" stroke-width="2"/><rect x="1573.5" y="174.5" width="13" height="12" fill="#e6e6e6" stroke="#c4c1bb" stroke-width="0.7"/><rect x="1573.5" y="178" width="13" height="2.5" fill="#d9d7d2"/><rect x="1581" y="182" width="8" height="7" fill="#cfcfcf"/><path d="M1598,177 H1610 L1608.5,189 H1599.5Z" fill="#e2d6d6" stroke="#cdb9b9" stroke-width="0.8"/><path d="M1597.5,176 H1610.5" stroke="#cdb9b9" stroke-width="1.2"/><path d="M1601.5,179v8M1604,179v8M1606.5,179v8" stroke="#cdb9b9" stroke-width="0.8"/><g fill="none" stroke="#cbc7c7" stroke-width="0.9"><path d="M1623,175 L1634,182 M1623,182 L1634,175"/><circle cx="1635" cy="177" r="2"/><circle cx="1635" cy="184" r="2"/></g><g fill="#f2f2f2" stroke="#d2d2d2" stroke-width="0.8"><path d="M1652,174.5 H1657 L1660,177.5 V185 H1652Z"/><path d="M1649,178 H1654 L1657,181 V189 H1649Z"/></g><g stroke="#d2d2d2" stroke-width="0.8"><rect x="1674.5" y="175" width="10.5" height="14" fill="#e8e8e8"/><rect x="1676.5" y="177" width="6.5" height="10" fill="#f6f6f6"/></g><rect x="1565" y="172" width="1" height="17" fill="#d8d8d8"/><rect x="1696" y="172" width="1" height="17" fill="#d8d8d8"/><text x="1705" y="183" font-size="15" fill="#5b2d86" font-family="Liberation Serif">ε</text><rect x="1711.5" y="179.5" width="9" height="9" fill="#fde65a" stroke="#c9a800" stroke-width="0.8"/><g fill="#f7e04a" stroke="#c9a800" stroke-width="0.8"><rect x="1730.5" y="174.5" width="13" height="3.5" rx="1"/><rect x="1730.5" y="179.5" width="13" height="3.5" rx="1"/><rect x="1730.5" y="184.5" width="13" height="3.5" rx="1"/></g><rect x="1755.5" y="174.5" width="13" height="13" fill="#f7e04a" stroke="#c9a800" stroke-width="0.8"/><path d="M1756,175 L1768,187" stroke="#555" stroke-width="0.8"/><rect x="1780.5" y="174.5" width="9" height="9" fill="#f7e04a" stroke="#c9a800" stroke-width="0.8"/><circle cx="1790" cy="185" r="3.5" fill="#e83030"/><path d="M1804.5,174.5 H1818.5 L1813,181 V188 L1810,186 V181Z" fill="#5a89c6"/><rect x="1804.5" y="174" width="14" height="2.5" fill="#f0d020"/><rect x="1829.5" y="174.5" width="14" height="13" fill="#7fb0e0" stroke="#4a7ab0" stroke-width="0.8"/><path d="M1832,177h9M1836.5,179 v6 M1834,181 l2.5,-2.5 2.5,2.5" stroke="#1a3a6a" stroke-width="1" fill="none"/><g fill="#f7e04a" stroke="#3e6aa5" stroke-width="0.6"><rect x="1857" y="177" width="9" height="8"/></g><g fill="#5a89c6"><path d="M1861.5,172 l3,3h-6z M1861.5,190 l3,-3h-6z M1853,181 l3,-3v6z M1870,181 l-3,-3v6z"/></g><path d="M1892,177 l3,3 -3,3 M1896,177 l3,3 -3,3" fill="none" stroke="#555" stroke-width="1.1"/><rect x="1489.5" y="871.5" width="13" height="14" fill="#fff" stroke="#6f9ad4"/><rect x="1490" y="872" width="12" height="3" fill="#cfe0f5"/><path d="M1491,878h10M1491,881h10M1491,884h10" stroke="#6f9ad4" stroke-width="0.8"/><path d="M1610,884 h5 l-2.5,2.5z" fill="#444"/><rect x="1861.5" y="871.5" width="13" height="13" fill="#fff" stroke="#6f9ad4"/><path d="M1863,875h4M1863,881h4" stroke="#444"/><rect x="1868" y="873.5" width="5" height="4" fill="none" stroke="#6f9ad4"/><rect x="1868" y="879.5" width="5" height="4" fill="none" stroke="#6f9ad4"/><rect x="1885.5" y="872.5" width="13" height="13" fill="#fff" stroke="#6f9ad4"/><rect x="1886" y="873" width="12" height="3" fill="#cfe0f5"/><path d="M1887,879h10M1887,882h10" stroke="#6f9ad4" stroke-width="0.8"/></svg></body></html>
